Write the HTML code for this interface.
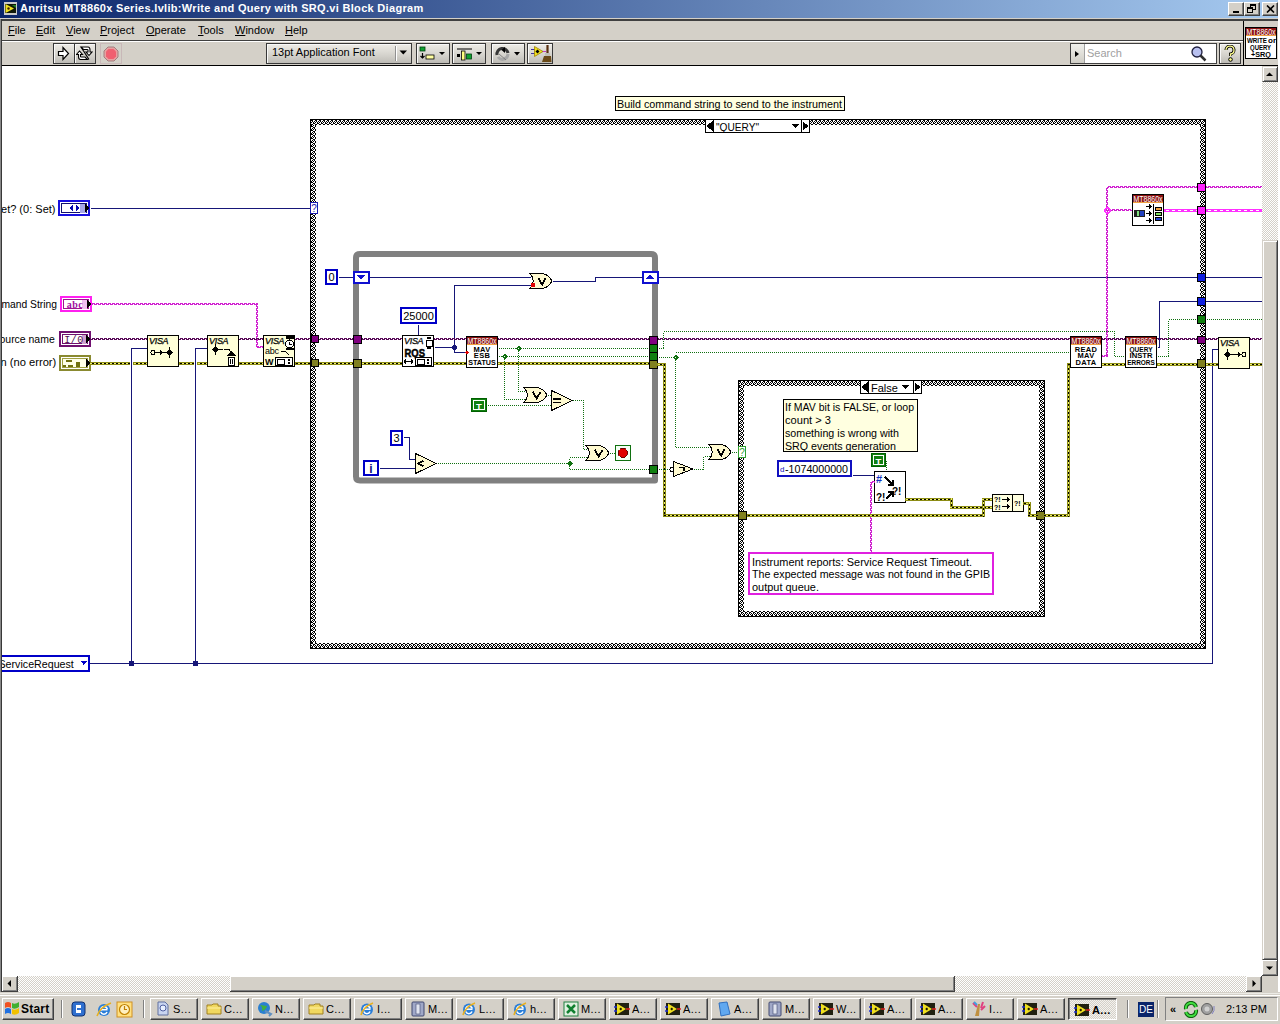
<!DOCTYPE html>
<html><head><meta charset="utf-8">
<style>
*{margin:0;padding:0;box-sizing:border-box}
html,body{width:1280px;height:1024px;overflow:hidden;background:#fff;font-family:"Liberation Sans",sans-serif}
.a{position:absolute}
#title{left:0;top:0;width:1280px;height:18px;background:linear-gradient(to right,#0a246a 0%,#a6caf0 100%)}
#ttext{left:20px;top:2px;color:#fff;font-weight:bold;font-size:11px;line-height:13px;white-space:nowrap;letter-spacing:0.31px}
.wbtn{top:2px;width:16px;height:14px;background:#d4d0c8;border-top:1px solid #fff;border-left:1px solid #fff;border-right:1px solid #404040;border-bottom:1px solid #404040;box-shadow:inset -1px -1px #808080}
.mi{top:24px;font-size:11px;line-height:13px;color:#000;white-space:nowrap}
.tb{top:43px;height:21px;background:linear-gradient(#eeece6,#d6d4ce 55%,#bebcb6);border:1px solid #383838;box-shadow:inset 1px 1px #f8f8f8}
.txt{font-size:11px;line-height:13px;white-space:nowrap;color:#000}
.tbtn{top:998px;height:22px;width:48px;background:#d4d0c8;border-top:1px solid #fff;border-left:1px solid #fff;border-right:1px solid #404040;border-bottom:1px solid #404040;box-shadow:inset -1px -1px #808080;font-size:11px;line-height:19px;white-space:nowrap;overflow:hidden}
.tbtn span{position:absolute;left:22px;top:0}
.tbtn i{position:absolute;left:4px;top:3px;width:14px;height:14px}
.sep{width:2px;border-left:1px solid #808080;border-right:1px solid #fff}
</style></head>
<body>
<!-- title bar -->
<div id="title" class="a"></div>
<div class="a" style="left:0;top:18px;width:1280px;height:1px;background:#d4d0c8"></div>
<div class="a" style="left:0;top:19px;width:1278px;height:2px;background:#404040"></div>
<svg class="a" style="left:4px;top:2px" width="13" height="13" viewBox="0 0 13 13">
<rect x="0" y="0" width="13" height="13" fill="#c8c8c8"/><rect x="1" y="2" width="11" height="9" fill="#101808"/>
<path d="M1.5 2 L10 6.5 L1.5 11 Z" fill="#f0e020"/><circle cx="4.5" cy="6.5" r="1.2" fill="#402000"/>
<path d="M8 3 L12 3 L12 6 Z" fill="#208020"/></svg>
<div id="ttext" class="a">Anritsu MT8860x Series.lvlib:Write and Query with SRQ.vi Block Diagram</div>
<div class="a wbtn" style="left:1228px"><div class="a" style="left:4px;top:8px;width:6px;height:2px;background:#000"></div></div>
<div class="a wbtn" style="left:1244px"><div class="a" style="left:5px;top:1px;width:6px;height:6px;border:1px solid #000;border-top-width:2px"></div><div class="a" style="left:2px;top:4px;width:6px;height:6px;border:1px solid #000;border-top-width:2px;background:#d4d0c8"></div></div>
<div class="a wbtn" style="left:1262px"></div><svg class="a" style="left:1266px;top:5px" width="9" height="8"><path d="M1 0.5 L8 7.5 M8 0.5 L1 7.5" stroke="#000" stroke-width="1.6"/></svg>
<div class="a" style="left:1278px;top:0;width:2px;height:1024px;background:#fff"></div>

<!-- menubar -->
<div class="a" style="left:0;top:21px;width:1278px;height:19px;background:#d4d0c8"></div>
<div class="a" style="left:0;top:40px;width:1244px;height:1px;background:#404040"></div>
<div class="a" style="left:0;top:41px;width:1244px;height:1px;background:#fff"></div>
<div class="a mi" style="left:8px"><u>F</u>ile</div>
<div class="a mi" style="left:36px"><u>E</u>dit</div>
<div class="a mi" style="left:66px"><u>V</u>iew</div>
<div class="a mi" style="left:100px"><u>P</u>roject</div>
<div class="a mi" style="left:146px"><u>O</u>perate</div>
<div class="a mi" style="left:198px"><u>T</u>ools</div>
<div class="a mi" style="left:235px"><u>W</u>indow</div>
<div class="a mi" style="left:285px"><u>H</u>elp</div>

<!-- toolbar -->
<div class="a" style="left:0;top:42px;width:1244px;height:23px;background:#d4d0c8"></div>
<div class="a" style="left:1243px;top:21px;width:1px;height:44px;background:#000"></div>
<div class="a" style="left:1244px;top:21px;width:34px;height:44px;background:#d4d0c8"></div>
<div class="a" style="left:0;top:65px;width:1278px;height:1px;background:#000"></div>
<!-- left window border -->
<div class="a" style="left:0;top:19px;width:1px;height:974px;background:#888"></div><div class="a" style="left:1px;top:19px;width:1px;height:974px;background:#383838"></div>

<!-- run buttons -->
<div class="a tb" style="left:53px;width:22px"></div>
<svg class="a" style="left:57px;top:46px" width="14" height="16" viewBox="0 0 14 16"><path d="M1.5 5.5 H6 V1.5 L11.5 7.5 L6 13.5 V9.5 H1.5 Z" fill="#fff" stroke="#000" stroke-width="1.2"/></svg>
<div class="a tb" style="left:74px;width:22px"></div>
<svg class="a" style="left:76px;top:46px" width="17" height="16" viewBox="0 0 17 16"><path d="M5 1 H12 Q14 1 14 4 V6 H16 L13 9.5 L10 6 H12 V4 Q12 3.5 11 3.5 H7.5 Z" fill="#fff" stroke="#000" stroke-width="1.1"/><path d="M11.5 13.5 H4.5 Q2.5 13.5 2.5 10.5 V8.5 H0.5 L3.5 5 L6.5 8.5 H4.5 V10.5 Q4.5 11 5.5 11 H9 Z" fill="#fff" stroke="#000" stroke-width="1.1"/><path d="M5 1 L13 13.5" stroke="#000" stroke-width="1.2"/></svg>
<div class="a" style="left:100px;top:43px;width:22px;height:21px;border:1px solid #c8b8b8;background:#d4d0c8"></div>
<svg class="a" style="left:103px;top:46px" width="16" height="16" viewBox="0 0 16 16"><path d="M5 1 H11 L15 5 V11 L11 15 H5 L1 11 V5 Z" fill="#e8a0a0" stroke="#a08080"/><path d="M5.5 3 H10.5 L13 5.5 V10.5 L10.5 13 H5.5 L3 10.5 V5.5 Z" fill="#f06070"/></svg>

<!-- font dropdown -->
<div class="a tb" style="left:266px;width:146px"></div>
<div class="a txt" style="left:272px;top:46px">13pt Application Font</div>
<div class="a" style="left:395px;top:46px;width:1px;height:15px;background:#909090"></div>
<div class="a" style="left:396px;top:46px;width:1px;height:15px;background:#fff"></div>
<svg class="a" style="left:399px;top:50px" width="9" height="6"><path d="M0.5 0.5 H8 L4.25 4.5 Z" fill="#000"/></svg>
<!-- align etc -->
<div class="a tb" style="left:416px;width:34px"></div>
<svg class="a" style="left:419px;top:46px" width="30" height="16"><rect x="1" y="1" width="5" height="4" fill="#10a030" stroke="#004010" stroke-width="0.8"/><path d="M3.5 7 V12 M1.5 10 L3.5 12 L5.5 10" stroke="#000" stroke-width="1.2" fill="none"/><rect x="7" y="9" width="8" height="4" fill="#ffffa0" stroke="#000" stroke-width="0.8"/><path d="M20 6 H26 L23 9 Z" fill="#000"/></svg>
<div class="a tb" style="left:452px;width:34px"></div>
<svg class="a" style="left:455px;top:46px" width="30" height="16"><path d="M2 3 H17" stroke="#000" stroke-width="1"/><rect x="2" y="8" width="3" height="3" fill="#000"/><rect x="6.5" y="5" width="3.5" height="9" fill="#ffff80" stroke="#000" stroke-width="0.8"/><rect x="11.5" y="8" width="5" height="5" fill="#10a030" stroke="#004010" stroke-width="0.8"/><path d="M21 6 H27 L24 9 Z" fill="#000"/></svg>
<div class="a tb" style="left:491px;width:34px"></div>
<svg class="a" style="left:494px;top:45px" width="30" height="17"><path d="M3 10 A5.5 5.5 0 0 1 14 8" stroke="#383838" stroke-width="3" fill="none"/><path d="M11 2 L7.5 5 L11 8 Z" fill="#000"/><path d="M14 9 A5.5 5.5 0 0 1 4 12" stroke="#a8a8a8" stroke-width="3" fill="none"/><path d="M5 9 L12 15" stroke="#707070" stroke-width="0.8"/><path d="M20 7 H26 L23 10.5 Z" fill="#000"/></svg>
<div class="a tb" style="left:527px;width:26px"></div>
<svg class="a" style="left:530px;top:44px" width="22" height="19"><path d="M1 5.5 H5 M1 9.5 H5" stroke="#4030a0" stroke-width="1.2"/><path d="M12 7.5 H16" stroke="#c040c0"/><path d="M4.5 2.5 L13 7.5 L4.5 12.5 Z" fill="#f0e020" stroke="#a08000" stroke-width="0.8"/><path d="M7.5 5.5 L9.5 7.5 L7.5 9.5 L5.5 7.5Z" fill="#000"/><path d="M17.5 1 V10" stroke="#5a3010" stroke-width="2.2"/><rect x="15" y="9" width="5" height="3" fill="#c0c0b8"/><path d="M12 18 L14 12 H21 L21.5 18 Z" fill="#6a4a18"/></svg>

<!-- search -->
<div class="a" style="left:1070px;top:43px;width:147px;height:21px;background:#fff;border:1px solid #404040"></div>
<div class="a" style="left:1071px;top:44px;width:14px;height:19px;background:linear-gradient(#f0f0ec,#d0cec6);border-right:1px solid #a0a0a0"></div>
<svg class="a" style="left:1074px;top:50px" width="6" height="8"><path d="M1 1 L5 4 L1 7 Z" fill="#000"/></svg>
<div class="a txt" style="left:1087px;top:47px;color:#a0a0a0">Search</div>
<svg class="a" style="left:1190px;top:45px" width="18" height="18"><circle cx="7" cy="7" r="5" fill="#b8c0f0" stroke="#202040" stroke-width="1.3"/><path d="M10.5 10.5 L15.5 15.5" stroke="#303030" stroke-width="2.5"/></svg>
<div class="a tb" style="left:1219px;width:22px"></div>
<svg class="a" style="left:1223px;top:45px" width="14" height="18"><path d="M3 5 A4 4 0 1 1 7.5 9 V11" stroke="#000" stroke-width="3" fill="none"/><path d="M3 5 A4 4 0 1 1 7.5 9 V11" stroke="#ffff90" stroke-width="1.3" fill="none"/><circle cx="7.5" cy="14.5" r="1.8" fill="#ffff90" stroke="#000" stroke-width="1"/></svg>
<!-- vi icon -->
<svg class="a" style="left:1245px;top:27px" width="32" height="32" viewBox="0 0 32 32">
<rect x="0.5" y="0.5" width="31" height="31" fill="#fff" stroke="#000"/>
<rect x="1" y="1" width="30" height="7" fill="#8b1010"/><rect x="1" y="8" width="30" height="1" fill="#f0a040"/>
<text x="1.5" y="7.6" font-family="Liberation Sans" font-size="9" fill="#fff" textLength="29" lengthAdjust="spacingAndGlyphs">MT8860x</text>
<text x="2" y="16" font-family="Liberation Sans" font-size="8" font-weight="bold" fill="#000" textLength="20" lengthAdjust="spacingAndGlyphs">WRITE</text>
<text x="23" y="16" font-family="Liberation Sans" font-size="7" font-weight="bold" fill="#000" textLength="8" lengthAdjust="spacingAndGlyphs">or</text>
<text x="5" y="23" font-family="Liberation Sans" font-size="8" font-weight="bold" fill="#000" textLength="21" lengthAdjust="spacingAndGlyphs">QUERY</text>
<text x="6" y="30" font-family="Liberation Sans" font-size="8" font-weight="bold" fill="#000" textLength="20" lengthAdjust="spacingAndGlyphs">+SRQ</text>
</svg>
<!-- CANVAS -->
<div id="diagram"></div>
<svg class="a" style="left:0;top:0" width="1280" height="1024" viewBox="0 0 1280 1024"><defs><pattern id="sqh_d020d0" width="4" height="3" patternUnits="userSpaceOnUse"><path d="M0 0h3v1h-2v2h-1z M2 1h1v1h1v1h-2z" fill="#d020d0"/></pattern><pattern id="sqv_d020d0" width="3" height="4" patternUnits="userSpaceOnUse"><path d="M0 0v3h1v-2h2v-1z M1 2v1h1v1h1v-2z" fill="#d020d0"/></pattern><pattern id="sqh_580858" width="4" height="3" patternUnits="userSpaceOnUse"><path d="M0 0h3v1h-2v2h-1z M2 1h1v1h1v1h-2z" fill="#580858"/></pattern><pattern id="sqv_580858" width="3" height="4" patternUnits="userSpaceOnUse"><path d="M0 0v3h1v-2h2v-1z M1 2v1h1v1h1v-2z" fill="#580858"/></pattern><pattern id="errh" width="4" height="3" patternUnits="userSpaceOnUse"><rect width="4" height="3" fill="#8a8a10"/><rect x="0" y="1" width="2" height="1" fill="#000"/><rect x="2" y="1" width="2" height="1" fill="#f4f480"/></pattern><pattern id="errv" width="3" height="4" patternUnits="userSpaceOnUse"><rect width="3" height="4" fill="#8a8a10"/><rect x="1" y="0" width="1" height="2" fill="#000"/><rect x="1" y="2" width="1" height="2" fill="#f4f480"/></pattern><pattern id="chk" width="2" height="2" patternUnits="userSpaceOnUse"><rect width="2" height="2" fill="#fff"/><rect width="1" height="1" fill="#000"/><rect x="1" y="1" width="1" height="1" fill="#000"/></pattern><pattern id="pinkarr" width="6" height="3" patternUnits="userSpaceOnUse"><rect width="6" height="3" fill="#ff30ff"/><rect x="0" y="1" width="3" height="1" fill="#fff"/></pattern><pattern id="bh1" x="311" y="120" width="4" height="5" patternUnits="userSpaceOnUse"><rect width="4" height="5" fill="#fff"/><path d="M0 0h1v1h-1zM1 0h1v1h-1zM1 1h1v1h-1zM3 1h1v1h-1zM0 2h1v1h-1zM2 2h1v1h-1zM2 3h1v1h-1zM3 3h1v1h-1zM0 4h1v1h-1zM1 4h1v1h-1z" fill="#000"/></pattern><pattern id="bh2" x="311" y="643" width="4" height="5" patternUnits="userSpaceOnUse"><rect width="4" height="5" fill="#fff"/><path d="M0 0h1v1h-1zM1 0h1v1h-1zM2 1h1v1h-1zM3 1h1v1h-1zM0 2h1v1h-1zM2 2h1v1h-1zM1 3h1v1h-1zM3 3h1v1h-1zM0 4h1v1h-1zM1 4h1v1h-1z" fill="#000"/></pattern><pattern id="bv3" x="311" y="125" width="5" height="4" patternUnits="userSpaceOnUse"><rect width="5" height="4" fill="#fff"/><path d="M0 0h1v1h-1zM0 1h1v1h-1zM1 1h1v1h-1zM1 3h1v1h-1zM2 0h1v1h-1zM2 2h1v1h-1zM3 2h1v1h-1zM3 3h1v1h-1zM4 0h1v1h-1zM4 1h1v1h-1z" fill="#000"/></pattern><pattern id="bv4" x="1200" y="125" width="5" height="4" patternUnits="userSpaceOnUse"><rect width="5" height="4" fill="#fff"/><path d="M0 0h1v1h-1zM0 1h1v1h-1zM1 2h1v1h-1zM1 3h1v1h-1zM2 0h1v1h-1zM2 2h1v1h-1zM3 1h1v1h-1zM3 3h1v1h-1zM4 0h1v1h-1zM4 1h1v1h-1z" fill="#000"/></pattern><pattern id="bh5" x="739" y="381" width="4" height="5" patternUnits="userSpaceOnUse"><rect width="4" height="5" fill="#fff"/><path d="M0 0h1v1h-1zM1 0h1v1h-1zM1 1h1v1h-1zM3 1h1v1h-1zM0 2h1v1h-1zM2 2h1v1h-1zM2 3h1v1h-1zM3 3h1v1h-1zM0 4h1v1h-1zM1 4h1v1h-1z" fill="#000"/></pattern><pattern id="bh6" x="739" y="611" width="4" height="5" patternUnits="userSpaceOnUse"><rect width="4" height="5" fill="#fff"/><path d="M0 0h1v1h-1zM1 0h1v1h-1zM2 1h1v1h-1zM3 1h1v1h-1zM0 2h1v1h-1zM2 2h1v1h-1zM1 3h1v1h-1zM3 3h1v1h-1zM0 4h1v1h-1zM1 4h1v1h-1z" fill="#000"/></pattern><pattern id="bv7" x="739" y="386" width="5" height="4" patternUnits="userSpaceOnUse"><rect width="5" height="4" fill="#fff"/><path d="M0 0h1v1h-1zM0 1h1v1h-1zM1 1h1v1h-1zM1 3h1v1h-1zM2 0h1v1h-1zM2 2h1v1h-1zM3 2h1v1h-1zM3 3h1v1h-1zM4 0h1v1h-1zM4 1h1v1h-1z" fill="#000"/></pattern><pattern id="bv8" x="1039" y="386" width="5" height="4" patternUnits="userSpaceOnUse"><rect width="5" height="4" fill="#fff"/><path d="M0 0h1v1h-1zM0 1h1v1h-1zM1 2h1v1h-1zM1 3h1v1h-1zM2 0h1v1h-1zM2 2h1v1h-1zM3 1h1v1h-1zM3 3h1v1h-1zM4 0h1v1h-1zM4 1h1v1h-1z" fill="#000"/></pattern><clipPath id="cv"><rect x="2" y="66" width="1260" height="910"/></clipPath></defs><g clip-path="url(#cv)" shape-rendering="crispEdges"><text x="1" y="212.5" font-family="Liberation Sans" font-size="11" fill="#000" font-weight="normal" font-style="normal" text-anchor="start" textLength="54.5" lengthAdjust="spacingAndGlyphs" >et? (0: Set)</text>
<text x="1.5" y="307.5" font-family="Liberation Sans" font-size="11" fill="#000" font-weight="normal" font-style="normal" text-anchor="start" textLength="55.5" lengthAdjust="spacingAndGlyphs" >mand String</text>
<text x="-0.5" y="342.5" font-family="Liberation Sans" font-size="11" fill="#000" font-weight="normal" font-style="normal" text-anchor="start" textLength="55.2" lengthAdjust="spacingAndGlyphs" >ource name</text>
<text x="0.5" y="366" font-family="Liberation Sans" font-size="11" fill="#000" font-weight="normal" font-style="normal" text-anchor="start" textLength="55.8" lengthAdjust="spacingAndGlyphs" >n (no error)</text>
<rect x="58" y="200" width="32" height="16" fill="#1810e0" stroke="none" stroke-width="1" />
<rect x="60" y="202" width="28" height="12" fill="#fff" stroke="none" stroke-width="1" />
<rect x="61.5" y="203.5" width="25" height="9" fill="#fff" stroke="#101070" stroke-width="1" />
<rect x="80" y="204" width="6" height="9" fill="#a8a8e8" stroke="none" stroke-width="1" />
<path d="M73 204 L69.5 208 L73 212Z M76 204 L79.5 208 L76 212Z" fill="#0808b0"/>
<path d="M85 204 L89 208 L85 212Z" fill="#000"/>
<rect x="60" y="296" width="32" height="16" fill="#ff20f0" stroke="none" stroke-width="1" />
<rect x="62" y="298" width="28" height="12" fill="#fff" stroke="none" stroke-width="1" />
<rect x="63.5" y="299.5" width="25" height="9" fill="#fff" stroke="#a01090" stroke-width="1" />
<rect x="82" y="300" width="5" height="9" fill="#f0c0f0" stroke="none" stroke-width="1" />
<text x="75" y="308" font-family="Liberation Serif" font-size="10" fill="#a010a0" font-weight="bold" font-style="normal" text-anchor="middle" letter-spacing="0.5" >abc</text>
<path d="M87 300 L91 304 L87 308Z" fill="#000"/>
<rect x="59" y="331" width="32" height="16" fill="#701070" stroke="none" stroke-width="1" />
<rect x="61" y="333" width="28" height="12" fill="#fff" stroke="none" stroke-width="1" />
<rect x="62.5" y="334.5" width="25" height="9" fill="#fff" stroke="#701070" stroke-width="1" />
<rect x="82" y="335" width="5" height="9" fill="#d0a0d0" stroke="none" stroke-width="1" />
<text x="74" y="343" font-family="Liberation Mono" font-size="10" fill="#501050" font-weight="normal" font-style="normal" text-anchor="middle" letter-spacing="0.5" >I/0</text>
<path d="M86 335 L90 339 L86 343Z" fill="#000"/>
<rect x="59" y="355" width="32" height="16" fill="#8a8a30" stroke="none" stroke-width="1" />
<rect x="61" y="357" width="28" height="12" fill="#fff" stroke="none" stroke-width="1" />
<rect x="62.5" y="358.5" width="25" height="9" fill="#ffffe8" stroke="#a0a040" stroke-width="1" />
<path d="M66 360 h6 v2 h-6z M63 365 h3 v2 h-3z M68 365 h5 v2 h-5z M76 362 h4 v5 h-4z" fill="#707010"/>
<path d="M86 359 L90 363 L86 367Z" fill="#000"/>
<path d="M90.5 208.5 L310.5 208.5" fill="none" stroke="#161678" stroke-width="1"/>
<path d="M92 303h3v1h-3zM96 303h3v1h-3zM100 303h3v1h-3zM104 303h3v1h-3zM108 303h3v1h-3zM112 303h3v1h-3zM116 303h3v1h-3zM120 303h3v1h-3zM124 303h3v1h-3zM128 303h3v1h-3zM132 303h3v1h-3zM136 303h3v1h-3zM140 303h3v1h-3zM144 303h3v1h-3zM148 303h3v1h-3zM152 303h3v1h-3zM156 303h3v1h-3zM160 303h3v1h-3zM164 303h3v1h-3zM168 303h3v1h-3zM172 303h3v1h-3zM176 303h3v1h-3zM180 303h3v1h-3zM184 303h3v1h-3zM188 303h3v1h-3zM192 303h3v1h-3zM196 303h3v1h-3zM200 303h3v1h-3zM204 303h3v1h-3zM208 303h3v1h-3zM212 303h3v1h-3zM216 303h3v1h-3zM220 303h3v1h-3zM224 303h3v1h-3zM228 303h3v1h-3zM232 303h3v1h-3zM236 303h3v1h-3zM240 303h3v1h-3zM244 303h3v1h-3zM248 303h3v1h-3zM252 303h3v1h-3zM256 303h2v1h-2zM92 304h1v1h-1zM94 304h3v1h-3zM98 304h3v1h-3zM102 304h3v1h-3zM106 304h3v1h-3zM110 304h3v1h-3zM114 304h3v1h-3zM118 304h3v1h-3zM122 304h3v1h-3zM126 304h3v1h-3zM130 304h3v1h-3zM134 304h3v1h-3zM138 304h3v1h-3zM142 304h3v1h-3zM146 304h3v1h-3zM150 304h3v1h-3zM154 304h3v1h-3zM158 304h3v1h-3zM162 304h3v1h-3zM166 304h3v1h-3zM170 304h3v1h-3zM174 304h3v1h-3zM178 304h3v1h-3zM182 304h3v1h-3zM186 304h3v1h-3zM190 304h3v1h-3zM194 304h3v1h-3zM198 304h3v1h-3zM202 304h3v1h-3zM206 304h3v1h-3zM210 304h3v1h-3zM214 304h3v1h-3zM218 304h3v1h-3zM222 304h3v1h-3zM226 304h3v1h-3zM230 304h3v1h-3zM234 304h3v1h-3zM238 304h3v1h-3zM242 304h3v1h-3zM246 304h3v1h-3zM250 304h3v1h-3zM254 304h3v1h-3z" fill="#d020d0"/>
<path d="M256 304v3h1v-3zM256 308v3h1v-3zM256 312v3h1v-3zM256 316v3h1v-3zM256 320v3h1v-3zM256 324v3h1v-3zM256 328v3h1v-3zM256 332v3h1v-3zM256 336v3h1v-3zM256 340v3h1v-3zM256 344v3h1v-3zM257 304v1h1v-1zM257 306v3h1v-3zM257 310v3h1v-3zM257 314v3h1v-3zM257 318v3h1v-3zM257 322v3h1v-3zM257 326v3h1v-3zM257 330v3h1v-3zM257 334v3h1v-3zM257 338v3h1v-3zM257 342v3h1v-3zM257 346v2h1v-2z" fill="#d020d0"/>
<path d="M257 346h2v1h-2zM260 346h3v1h-3zM258 347h3v1h-3zM262 347h2v1h-2z" fill="#d020d0"/>
<path d="M90 338h1v1h-1zM92 338h3v1h-3zM96 338h3v1h-3zM100 338h3v1h-3zM104 338h3v1h-3zM108 338h3v1h-3zM112 338h3v1h-3zM116 338h3v1h-3zM120 338h3v1h-3zM124 338h3v1h-3zM128 338h3v1h-3zM132 338h3v1h-3zM136 338h3v1h-3zM140 338h3v1h-3zM144 338h3v1h-3zM90 339h3v1h-3zM94 339h3v1h-3zM98 339h3v1h-3zM102 339h3v1h-3zM106 339h3v1h-3zM110 339h3v1h-3zM114 339h3v1h-3zM118 339h3v1h-3zM122 339h3v1h-3zM126 339h3v1h-3zM130 339h3v1h-3zM134 339h3v1h-3zM138 339h3v1h-3zM142 339h3v1h-3zM146 339h1v1h-1z" fill="#580858"/>
<path d="M180 338h3v1h-3zM184 338h3v1h-3zM188 338h3v1h-3zM192 338h3v1h-3zM196 338h3v1h-3zM200 338h3v1h-3zM204 338h3v1h-3zM179 339h2v1h-2zM182 339h3v1h-3zM186 339h3v1h-3zM190 339h3v1h-3zM194 339h3v1h-3zM198 339h3v1h-3zM202 339h3v1h-3zM206 339h1v1h-1z" fill="#580858"/>
<path d="M240 338h3v1h-3zM244 338h3v1h-3zM248 338h3v1h-3zM252 338h3v1h-3zM256 338h3v1h-3zM260 338h3v1h-3zM239 339h2v1h-2zM242 339h3v1h-3zM246 339h3v1h-3zM250 339h3v1h-3zM254 339h3v1h-3zM258 339h3v1h-3zM262 339h1v1h-1z" fill="#580858"/>
<path d="M296 338h3v1h-3zM300 338h3v1h-3zM304 338h3v1h-3zM308 338h3v1h-3zM295 339h2v1h-2zM298 339h3v1h-3zM302 339h3v1h-3zM306 339h3v1h-3zM310 339h1v1h-1z" fill="#580858"/>
<rect x="90" y="362" width="40" height="3" fill="#8c8c14"/>
<path d="M92 363h2v1h-2zM96 363h2v1h-2zM100 363h2v1h-2zM104 363h2v1h-2zM108 363h2v1h-2zM112 363h2v1h-2zM116 363h2v1h-2zM120 363h2v1h-2zM124 363h2v1h-2zM128 363h2v1h-2z" fill="#000"/><path d="M90 363h2v1h-2zM94 363h2v1h-2zM98 363h2v1h-2zM102 363h2v1h-2zM106 363h2v1h-2zM110 363h2v1h-2zM114 363h2v1h-2zM118 363h2v1h-2zM122 363h2v1h-2zM126 363h2v1h-2z" fill="#f0f070"/>
<rect x="133" y="362" width="14" height="3" fill="#8c8c14"/>
<path d="M136 363h2v1h-2zM140 363h2v1h-2zM144 363h2v1h-2z" fill="#000"/><path d="M134 363h2v1h-2zM138 363h2v1h-2zM142 363h2v1h-2zM146 363h1v1h-1z" fill="#f0f070"/>
<rect x="179" y="362" width="15" height="3" fill="#8c8c14"/>
<path d="M180 363h2v1h-2zM184 363h2v1h-2zM188 363h2v1h-2zM192 363h2v1h-2z" fill="#000"/><path d="M182 363h2v1h-2zM186 363h2v1h-2zM190 363h2v1h-2z" fill="#f0f070"/>
<rect x="197" y="362" width="10" height="3" fill="#8c8c14"/>
<path d="M200 363h2v1h-2zM204 363h2v1h-2z" fill="#000"/><path d="M198 363h2v1h-2zM202 363h2v1h-2zM206 363h1v1h-1z" fill="#f0f070"/>
<rect x="239" y="362" width="24" height="3" fill="#8c8c14"/>
<path d="M240 363h2v1h-2zM244 363h2v1h-2zM248 363h2v1h-2zM252 363h2v1h-2zM256 363h2v1h-2zM260 363h2v1h-2z" fill="#000"/><path d="M242 363h2v1h-2zM246 363h2v1h-2zM250 363h2v1h-2zM254 363h2v1h-2zM258 363h2v1h-2zM262 363h1v1h-1z" fill="#f0f070"/>
<rect x="295" y="362" width="16" height="3" fill="#8c8c14"/>
<path d="M296 363h2v1h-2zM300 363h2v1h-2zM304 363h2v1h-2zM308 363h2v1h-2z" fill="#000"/><path d="M298 363h2v1h-2zM302 363h2v1h-2zM306 363h2v1h-2zM310 363h1v1h-1z" fill="#f0f070"/>
<path d="M131.5 663.5 L131.5 348.5 L147.5 348.5" fill="none" stroke="#161678" stroke-width="1"/>
<path d="M195.5 663.5 L195.5 348.5 L207.5 348.5" fill="none" stroke="#161678" stroke-width="1"/>
<path d="M89.5 663.5 L1212.5 663.5 L1212.5 349.5 L1218.5 349.5" fill="none" stroke="#161678" stroke-width="1"/>
<circle cx="131.5" cy="663.5" r="2.8" fill="#161678"/>
<circle cx="195.5" cy="663.5" r="2.8" fill="#161678"/>
<rect x="-2" y="656" width="90.5" height="15" fill="#fff" stroke="#0000c8" stroke-width="2" />
<text x="-1.5" y="668" font-family="Liberation Sans" font-size="11" fill="#000" font-weight="normal" font-style="normal" text-anchor="start" textLength="75.3" lengthAdjust="spacingAndGlyphs" >ServiceRequest</text>
<path d="M80.5 661 H87 L83.75 665 Z" fill="#0000c8"/>
<rect x="147.5" y="335.5" width="31" height="31" fill="#ffffd8" stroke="#000" stroke-width="1" />
<text x="149" y="344" font-family="Liberation Sans" font-size="9" fill="#000" font-weight="normal" font-style="italic" text-anchor="start" letter-spacing="-0.3" stroke="#000" stroke-width="0.25">VISA</text>
<rect x="207.5" y="335.5" width="31" height="31" fill="#ffffd8" stroke="#000" stroke-width="1" />
<text x="209" y="344" font-family="Liberation Sans" font-size="9" fill="#000" font-weight="normal" font-style="italic" text-anchor="start" letter-spacing="-0.3" stroke="#000" stroke-width="0.25">VISA</text>
<circle cx="153" cy="352.5" r="2" fill="none" stroke="#000"/>
<path d="M155 352.5 H162 M160 350.5 L162 352.5 L160 354.5 M163 352.5 H170" stroke="#000" fill="none"/>
<path d="M169.5 349 L173 352.5 L169.5 356 L166 352.5Z" fill="#000"/><path d="M169.5 347 V358" stroke="#000"/>
<path d="M213 349.5 H223 M224 349.5 H229 L231 352" stroke="#000" fill="none"/>
<path d="M215.5 346 L219 349.5 L215.5 353 L212 349.5Z" fill="#000"/><path d="M215.5 344 V355" stroke="#000"/>
<path d="M227 356 H236 L231.5 351Z" fill="#000"/><rect x="228.5" y="357.5" width="6" height="8" fill="#fff" stroke="#000"/><path d="M230.5 359 V364 M232.5 359 V364" stroke="#000"/>
<rect x="263.5" y="335.5" width="31" height="31" fill="#ffffd8" stroke="#000" stroke-width="1" />
<text x="265" y="344" font-family="Liberation Sans" font-size="9" fill="#000" font-weight="normal" font-style="italic" text-anchor="start" letter-spacing="-0.3" stroke="#000" stroke-width="0.25">VISA</text>
<rect x="286" y="336" width="8" height="3" fill="#000"/><circle cx="289.5" cy="344" r="4" fill="#fff" stroke="#000" stroke-width="1.2"/><path d="M289.5 341.5 V344 H291.5" stroke="#000" fill="none"/><rect x="286" y="348" width="8" height="2" fill="#000"/>
<text x="265" y="354" font-family="Liberation Sans" font-size="9" fill="#000" font-weight="normal" font-style="normal" text-anchor="start" letter-spacing="-0.3" >abc</text>
<path d="M281 351 H285 L289 355" stroke="#000" fill="none"/>
<text x="265" y="365" font-family="Liberation Sans" font-size="9" fill="#000" font-weight="bold" font-style="normal" text-anchor="start" >W</text>
<rect x="275.5" y="357.5" width="17" height="8" fill="#fff" stroke="#000"/><rect x="277" y="359" width="7" height="5" fill="none" stroke="#000"/><rect x="288" y="359" width="2" height="2" fill="#000"/><rect x="288" y="362" width="2" height="2" fill="#000"/>
<rect x="311" y="120" width="894" height="5" fill="url(#bh1)"/>
<rect x="311" y="643" width="894" height="5" fill="url(#bh2)"/>
<rect x="311" y="125" width="5" height="518" fill="url(#bv3)"/>
<rect x="1200" y="125" width="5" height="518" fill="url(#bv4)"/>
<rect x="310.5" y="119.5" width="895" height="529" fill="none" stroke="#000" stroke-width="1" />
<rect x="310.5" y="202.5" width="7" height="11" fill="#fff" stroke="#1a1ab0" stroke-width="1.2" />
<text x="314" y="212" font-family="Liberation Sans" font-size="10" fill="#1a1ab0" font-weight="normal" font-style="normal" text-anchor="middle" >?</text>
<rect x="705.5" y="119.5" width="104" height="13" fill="#fff" stroke="#000" stroke-width="1" />
<path d="M713.5 120 V132 M801.5 120 V132" stroke="#000"/>
<path d="M712.5 121 V131 L706.5 126Z M802.5 121 V131 L808.5 126Z" fill="#000"/>
<text x="716" y="131" font-family="Liberation Sans" font-size="11" fill="#000" font-weight="normal" font-style="normal" text-anchor="start" textLength="43" lengthAdjust="spacingAndGlyphs" >"QUERY"</text>
<path d="M792 124 H799 L795.5 128Z" fill="#000"/>
<rect x="615.5" y="96.5" width="229" height="14" fill="#ffffe0" stroke="#000" stroke-width="1" />
<text x="617" y="108" font-family="Liberation Sans" font-size="11" fill="#000" font-weight="normal" font-style="normal" text-anchor="start" textLength="225" lengthAdjust="spacingAndGlyphs" >Build command string to send to the instrument</text>
<path d="M310.5 208.5" fill="none" stroke="#161678" stroke-width="1"/>
<rect x="311.5" y="335.5" width="7" height="7" fill="#800080" stroke="#000" stroke-width="1" />
<rect x="311.5" y="359.5" width="7" height="7" fill="#808020" stroke="#000" stroke-width="1" />
<path d="M320 338h3v1h-3zM324 338h3v1h-3zM328 338h3v1h-3zM332 338h3v1h-3zM336 338h3v1h-3zM340 338h3v1h-3zM344 338h3v1h-3zM348 338h3v1h-3zM352 338h2v1h-2zM319 339h2v1h-2zM322 339h3v1h-3zM326 339h3v1h-3zM330 339h3v1h-3zM334 339h3v1h-3zM338 339h3v1h-3zM342 339h3v1h-3zM346 339h3v1h-3zM350 339h3v1h-3z" fill="#580858"/>
<rect x="319" y="362" width="35" height="3" fill="#8c8c14"/>
<path d="M320 363h2v1h-2zM324 363h2v1h-2zM328 363h2v1h-2zM332 363h2v1h-2zM336 363h2v1h-2zM340 363h2v1h-2zM344 363h2v1h-2zM348 363h2v1h-2zM352 363h2v1h-2z" fill="#000"/><path d="M322 363h2v1h-2zM326 363h2v1h-2zM330 363h2v1h-2zM334 363h2v1h-2zM338 363h2v1h-2zM342 363h2v1h-2zM346 363h2v1h-2zM350 363h2v1h-2z" fill="#f0f070"/>
<path d="M356 258 Q356 254 360 254 H651 Q655 254 655 258 V480.5 H360 Q356 480.5 356 476.5 Z" fill="none" stroke="#808080" stroke-width="6" stroke-linejoin="round" shape-rendering="geometricPrecision"/>
<rect x="326.0" y="270.0" width="11" height="14" fill="#fff" stroke="#0000c8" stroke-width="2" />
<text x="331.5" y="281" font-family="Liberation Sans" font-size="11" fill="#000" font-weight="normal" font-style="normal" text-anchor="middle" >0</text>
<path d="M338.5 277.5 L353.5 277.5" fill="none" stroke="#161678" stroke-width="1"/>
<rect x="353.5" y="271.5" width="15" height="11" fill="#fff" stroke="#1010d0" stroke-width="2" />
<path d="M357 275 H365 L361 280Z" fill="#1010d0"/>
<path d="M369.5 277.5 L530.5 277.5" fill="none" stroke="#161678" stroke-width="1"/>
<rect x="642.5" y="271.5" width="15" height="11" fill="#fff" stroke="#1010d0" stroke-width="2" />
<path d="M646 279 H654 L650 274Z" fill="#1010d0"/>
<path d="M454.5 347.5 L454.5 285.5 L531.5 285.5" fill="none" stroke="#161678" stroke-width="1"/>
<path d="M530 273.5 H539.9 Q548.7 273.5 552 281.0 Q548.7 288.5 539.9 288.5 H530 Q536.6 281.0 530 273.5 Z" fill="#fffad0" stroke="#000" stroke-width="1"/>
<path d="M538.36 277.8 L542.1 284.52 L545.84 277.8" fill="none" stroke="#000" stroke-width="1.8"/>
<circle cx="533" cy="285" r="2.2" fill="#e00000"/>
<path d="M552.5 281.5 L595.5 281.5 L595.5 277.5 L642.5 277.5" fill="none" stroke="#161678" stroke-width="1"/>
<path d="M658.5 277.5 L1262.5 277.5" fill="none" stroke="#161678" stroke-width="1"/>
<rect x="353.5" y="335.5" width="8" height="8" fill="#800080" stroke="#000" stroke-width="1" />
<rect x="353.5" y="359.5" width="8" height="8" fill="#808020" stroke="#000" stroke-width="1" />
<path d="M362 338h1v1h-1zM364 338h3v1h-3zM368 338h3v1h-3zM372 338h3v1h-3zM376 338h3v1h-3zM380 338h3v1h-3zM384 338h3v1h-3zM388 338h3v1h-3zM392 338h3v1h-3zM396 338h3v1h-3zM400 338h2v1h-2zM362 339h3v1h-3zM366 339h3v1h-3zM370 339h3v1h-3zM374 339h3v1h-3zM378 339h3v1h-3zM382 339h3v1h-3zM386 339h3v1h-3zM390 339h3v1h-3zM394 339h3v1h-3zM398 339h3v1h-3z" fill="#580858"/>
<rect x="362" y="362" width="40" height="3" fill="#8c8c14"/>
<path d="M364 363h2v1h-2zM368 363h2v1h-2zM372 363h2v1h-2zM376 363h2v1h-2zM380 363h2v1h-2zM384 363h2v1h-2zM388 363h2v1h-2zM392 363h2v1h-2zM396 363h2v1h-2zM400 363h2v1h-2z" fill="#000"/><path d="M362 363h2v1h-2zM366 363h2v1h-2zM370 363h2v1h-2zM374 363h2v1h-2zM378 363h2v1h-2zM382 363h2v1h-2zM386 363h2v1h-2zM390 363h2v1h-2zM394 363h2v1h-2zM398 363h2v1h-2z" fill="#f0f070"/>
<rect x="401.0" y="308.0" width="35" height="15" fill="#fff" stroke="#0000c8" stroke-width="2" />
<text x="418.5" y="320" font-family="Liberation Sans" font-size="11" fill="#000" font-weight="normal" font-style="normal" text-anchor="middle" >25000</text>
<path d="M418.5 324.5 L418.5 335.5" fill="none" stroke="#161678" stroke-width="1"/>
<rect x="402.5" y="335.5" width="31" height="31" fill="#fff" stroke="#000" stroke-width="1" />
<text x="404" y="344" font-family="Liberation Sans" font-size="9" fill="#000" font-weight="normal" font-style="italic" text-anchor="start" letter-spacing="-0.3" stroke="#000" stroke-width="0.25">VISA</text>
<rect x="427" y="337" width="4" height="2" fill="#000"/><rect x="426" y="340" width="6" height="6" fill="#fff" stroke="#000"/><rect x="427" y="347" width="4" height="2" fill="#000"/>
<text x="404.5" y="356.5" font-family="Liberation Sans" font-size="10.5" fill="#000" font-weight="bold" font-style="normal" text-anchor="start" textLength="20.5" lengthAdjust="spacingAndGlyphs" stroke="#000" stroke-width="0.5">RQS</text>
<path d="M405 361.5 H412 M404 361.5 L406 359.5 M404 361.5 L406 363.5 M413 361.5 L411 359.5 M413 361.5 L411 363.5" stroke="#000"/>
<rect x="415.5" y="357.5" width="16" height="8" fill="#fff" stroke="#000"/><rect x="417" y="359" width="7" height="5" fill="none" stroke="#000"/><rect x="427" y="359" width="2" height="2" fill="#000"/><rect x="427" y="362" width="2" height="2" fill="#000"/>
<path d="M434 338h1v1h-1zM436 338h3v1h-3zM440 338h3v1h-3zM444 338h3v1h-3zM448 338h3v1h-3zM452 338h3v1h-3zM456 338h3v1h-3zM460 338h3v1h-3zM464 338h2v1h-2zM434 339h3v1h-3zM438 339h3v1h-3zM442 339h3v1h-3zM446 339h3v1h-3zM450 339h3v1h-3zM454 339h3v1h-3zM458 339h3v1h-3zM462 339h3v1h-3z" fill="#580858"/>
<rect x="434" y="362" width="32" height="3" fill="#8c8c14"/>
<path d="M436 363h2v1h-2zM440 363h2v1h-2zM444 363h2v1h-2zM448 363h2v1h-2zM452 363h2v1h-2zM456 363h2v1h-2zM460 363h2v1h-2zM464 363h2v1h-2z" fill="#000"/><path d="M434 363h2v1h-2zM438 363h2v1h-2zM442 363h2v1h-2zM446 363h2v1h-2zM450 363h2v1h-2zM454 363h2v1h-2zM458 363h2v1h-2zM462 363h2v1h-2z" fill="#f0f070"/>
<path d="M434.5 347.5 L454.5 347.5 L454.5 352.5 L466.5 352.5" fill="none" stroke="#161678" stroke-width="1"/>
<circle cx="454.5" cy="347.5" r="2.5" fill="#161678"/>
<rect x="466.5" y="336.5" width="31" height="31" fill="#fff" stroke="#000" stroke-width="1" />
<rect x="467" y="337" width="30" height="7" fill="#8b1010" stroke="none" stroke-width="1" />
<rect x="467" y="344" width="30" height="1" fill="#f0a040" stroke="none" stroke-width="1" />
<text x="467.5" y="343.5" font-family="Liberation Sans" font-size="9" fill="#fff" font-weight="normal" font-style="normal" text-anchor="start" textLength="29" lengthAdjust="spacingAndGlyphs" >MT8860x</text>
<text x="482" y="351.5" font-family="Liberation Sans" font-size="7.5" fill="#000" font-weight="bold" font-style="normal" text-anchor="middle" letter-spacing="0.3" >MAV</text>
<text x="482" y="358.1" font-family="Liberation Sans" font-size="7.5" fill="#000" font-weight="bold" font-style="normal" text-anchor="middle" letter-spacing="0.3" >ESB</text>
<text x="468.2" y="364.7" font-family="Liberation Sans" font-size="7.5" fill="#000" font-weight="bold" font-style="normal" text-anchor="start" textLength="27.599999999999998" lengthAdjust="spacingAndGlyphs" >STATUS</text>
<circle cx="467" cy="352.5" r="1.8" fill="#e00000"/>
<path d="M498 338h1v1h-1zM500 338h3v1h-3zM504 338h3v1h-3zM508 338h3v1h-3zM512 338h3v1h-3zM516 338h3v1h-3zM520 338h3v1h-3zM524 338h3v1h-3zM528 338h3v1h-3zM532 338h3v1h-3zM536 338h3v1h-3zM540 338h3v1h-3zM544 338h3v1h-3zM548 338h3v1h-3zM552 338h3v1h-3zM556 338h3v1h-3zM560 338h3v1h-3zM564 338h3v1h-3zM568 338h3v1h-3zM572 338h3v1h-3zM576 338h3v1h-3zM580 338h3v1h-3zM584 338h3v1h-3zM588 338h3v1h-3zM592 338h3v1h-3zM596 338h3v1h-3zM600 338h3v1h-3zM604 338h3v1h-3zM608 338h3v1h-3zM612 338h3v1h-3zM616 338h3v1h-3zM620 338h3v1h-3zM624 338h3v1h-3zM628 338h3v1h-3zM632 338h3v1h-3zM636 338h3v1h-3zM640 338h3v1h-3zM644 338h3v1h-3zM648 338h1v1h-1zM498 339h3v1h-3zM502 339h3v1h-3zM506 339h3v1h-3zM510 339h3v1h-3zM514 339h3v1h-3zM518 339h3v1h-3zM522 339h3v1h-3zM526 339h3v1h-3zM530 339h3v1h-3zM534 339h3v1h-3zM538 339h3v1h-3zM542 339h3v1h-3zM546 339h3v1h-3zM550 339h3v1h-3zM554 339h3v1h-3zM558 339h3v1h-3zM562 339h3v1h-3zM566 339h3v1h-3zM570 339h3v1h-3zM574 339h3v1h-3zM578 339h3v1h-3zM582 339h3v1h-3zM586 339h3v1h-3zM590 339h3v1h-3zM594 339h3v1h-3zM598 339h3v1h-3zM602 339h3v1h-3zM606 339h3v1h-3zM610 339h3v1h-3zM614 339h3v1h-3zM618 339h3v1h-3zM622 339h3v1h-3zM626 339h3v1h-3zM630 339h3v1h-3zM634 339h3v1h-3zM638 339h3v1h-3zM642 339h3v1h-3zM646 339h3v1h-3z" fill="#580858"/>
<rect x="498" y="362" width="151" height="3" fill="#8c8c14"/>
<path d="M500 363h2v1h-2zM504 363h2v1h-2zM508 363h2v1h-2zM512 363h2v1h-2zM516 363h2v1h-2zM520 363h2v1h-2zM524 363h2v1h-2zM528 363h2v1h-2zM532 363h2v1h-2zM536 363h2v1h-2zM540 363h2v1h-2zM544 363h2v1h-2zM548 363h2v1h-2zM552 363h2v1h-2zM556 363h2v1h-2zM560 363h2v1h-2zM564 363h2v1h-2zM568 363h2v1h-2zM572 363h2v1h-2zM576 363h2v1h-2zM580 363h2v1h-2zM584 363h2v1h-2zM588 363h2v1h-2zM592 363h2v1h-2zM596 363h2v1h-2zM600 363h2v1h-2zM604 363h2v1h-2zM608 363h2v1h-2zM612 363h2v1h-2zM616 363h2v1h-2zM620 363h2v1h-2zM624 363h2v1h-2zM628 363h2v1h-2zM632 363h2v1h-2zM636 363h2v1h-2zM640 363h2v1h-2zM644 363h2v1h-2zM648 363h1v1h-1z" fill="#000"/><path d="M498 363h2v1h-2zM502 363h2v1h-2zM506 363h2v1h-2zM510 363h2v1h-2zM514 363h2v1h-2zM518 363h2v1h-2zM522 363h2v1h-2zM526 363h2v1h-2zM530 363h2v1h-2zM534 363h2v1h-2zM538 363h2v1h-2zM542 363h2v1h-2zM546 363h2v1h-2zM550 363h2v1h-2zM554 363h2v1h-2zM558 363h2v1h-2zM562 363h2v1h-2zM566 363h2v1h-2zM570 363h2v1h-2zM574 363h2v1h-2zM578 363h2v1h-2zM582 363h2v1h-2zM586 363h2v1h-2zM590 363h2v1h-2zM594 363h2v1h-2zM598 363h2v1h-2zM602 363h2v1h-2zM606 363h2v1h-2zM610 363h2v1h-2zM614 363h2v1h-2zM618 363h2v1h-2zM622 363h2v1h-2zM626 363h2v1h-2zM630 363h2v1h-2zM634 363h2v1h-2zM638 363h2v1h-2zM642 363h2v1h-2zM646 363h2v1h-2z" fill="#f0f070"/>
<path d="M498.5 348.5 L649.5 348.5" fill="none" stroke="#107010" stroke-width="1" stroke-dasharray="1 1"/>
<path d="M498.5 356.5 L649.5 356.5" fill="none" stroke="#107010" stroke-width="1" stroke-dasharray="1 1"/>
<path d="M518.5 348.5 L518.5 391.5 L524.5 391.5" fill="none" stroke="#107010" stroke-width="1" stroke-dasharray="1 1"/>
<path d="M504.5 356.5 L504.5 399.5 L525.5 399.5" fill="none" stroke="#107010" stroke-width="1" stroke-dasharray="1 1"/>
<path d="M518.5 345.5 L521.5 348.5 L518.5 351.5 L515.5 348.5Z" fill="#107010"/><rect x="518.0" y="348.0" width="1" height="1" fill="#fff"/>
<path d="M504.5 353.5 L507.5 356.5 L504.5 359.5 L501.5 356.5Z" fill="#107010"/><rect x="504.0" y="356.0" width="1" height="1" fill="#fff"/>
<path d="M524 387.5 H534.35 Q543.55 387.5 547 395.0 Q543.55 402.5 534.35 402.5 H524 Q530.9 395.0 524 387.5 Z" fill="#fffad0" stroke="#000" stroke-width="1"/>
<path d="M532.74 391.8 L536.65 398.52 L540.56 391.8" fill="none" stroke="#000" stroke-width="1.8"/>
<path d="M547.5 395.5 L551.5 395.5" fill="none" stroke="#107010" stroke-width="1" stroke-dasharray="1 1"/>
<path d="M551.5 390.5 L572 400.5 L551.5 410.5 Z" fill="#fffad0" stroke="#000" stroke-width="1"/>
<path d="M553 399 H561 M553 402.5 H561" stroke="#000" stroke-width="1.8"/>
<rect x="471.5" y="398.5" width="15" height="13" fill="#108010" stroke="#006000" stroke-width="1" />
<rect x="473.5" y="400.5" width="11" height="9" fill="none" stroke="#fff" stroke-width="1" />
<text x="479" y="409.5" font-family="Liberation Sans" font-size="9.5" fill="#fff" font-weight="bold" font-style="normal" text-anchor="middle" >T</text>
<path d="M487.5 405.5 L551.5 405.5" fill="none" stroke="#107010" stroke-width="1" stroke-dasharray="1 1"/>
<path d="M572.5 400.5 L583.5 400.5 L583.5 449.5 L587.5 449.5" fill="none" stroke="#107010" stroke-width="1" stroke-dasharray="1 1"/>
<rect x="391.0" y="431.0" width="11" height="14" fill="#fff" stroke="#0000c8" stroke-width="2" />
<text x="396.5" y="442" font-family="Liberation Sans" font-size="11" fill="#000" font-weight="normal" font-style="normal" text-anchor="middle" >3</text>
<rect x="364.0" y="461.0" width="14" height="14" fill="#fff" stroke="#0000c8" stroke-width="2" />
<text x="371" y="472.5" font-family="Liberation Sans" font-size="12" fill="#101080" font-weight="bold" font-style="normal" text-anchor="middle" >i</text>
<path d="M403.5 437.5 L409.5 437.5 L409.5 459.5 L415.5 459.5" fill="none" stroke="#161678" stroke-width="1"/>
<path d="M379.5 468.5 L415.5 468.5" fill="none" stroke="#161678" stroke-width="1"/>
<path d="M415.5 453.5 L436 463.5 L415.5 473.5 Z" fill="#fffad0" stroke="#000" stroke-width="1"/>
<path d="M423.5 460.5 L418.5 463.5 L423.5 466.5" stroke="#000" stroke-width="2" fill="none"/>
<path d="M437.5 463.5 L569.5 463.5" fill="none" stroke="#107010" stroke-width="1" stroke-dasharray="1 1"/>
<path d="M569.5 460.5 L572.5 463.5 L569.5 466.5 L566.5 463.5Z" fill="#107010"/><rect x="569.0" y="463.0" width="1" height="1" fill="#fff"/>
<path d="M569.5 463.5 L569.5 457.5 L587.5 457.5" fill="none" stroke="#107010" stroke-width="1" stroke-dasharray="1 1"/>
<path d="M569.5 463.5 L569.5 469.5 L649.5 469.5" fill="none" stroke="#107010" stroke-width="1" stroke-dasharray="1 1"/>
<path d="M586 445.5 H596.35 Q605.55 445.5 609 453.0 Q605.55 460.5 596.35 460.5 H586 Q592.9 453.0 586 445.5 Z" fill="#fffad0" stroke="#000" stroke-width="1"/>
<path d="M594.74 449.8 L598.65 456.52 L602.56 449.8" fill="none" stroke="#000" stroke-width="1.8"/>
<path d="M609.5 453.5 L615.5 453.5" fill="none" stroke="#107010" stroke-width="1" stroke-dasharray="1 1"/>
<rect x="615.5" y="445.5" width="15" height="15" fill="#f4fff4" stroke="#107010" stroke-width="1" />
<circle cx="623" cy="453" r="4.8" fill="#e00000" stroke="#500000" stroke-width="0.8"/>
<rect x="649.5" y="336.5" width="8" height="8" fill="#800080" stroke="#000" stroke-width="1" />
<rect x="649.5" y="344.5" width="8" height="8" fill="#108010" stroke="#000" stroke-width="1" />
<rect x="649.5" y="352.5" width="8" height="8" fill="#108010" stroke="#000" stroke-width="1" />
<rect x="649.5" y="360.5" width="8" height="8" fill="#808020" stroke="#000" stroke-width="1" />
<rect x="649.5" y="465.5" width="8" height="8" fill="#108010" stroke="#000" stroke-width="1" />
<path d="M658 338h1v1h-1zM660 338h3v1h-3zM664 338h3v1h-3zM668 338h3v1h-3zM672 338h3v1h-3zM676 338h3v1h-3zM680 338h3v1h-3zM684 338h3v1h-3zM688 338h3v1h-3zM692 338h3v1h-3zM696 338h3v1h-3zM700 338h3v1h-3zM704 338h3v1h-3zM708 338h3v1h-3zM712 338h3v1h-3zM716 338h3v1h-3zM720 338h3v1h-3zM724 338h3v1h-3zM728 338h3v1h-3zM732 338h3v1h-3zM736 338h3v1h-3zM740 338h3v1h-3zM744 338h3v1h-3zM748 338h3v1h-3zM752 338h3v1h-3zM756 338h3v1h-3zM760 338h3v1h-3zM764 338h3v1h-3zM768 338h3v1h-3zM772 338h3v1h-3zM776 338h3v1h-3zM780 338h3v1h-3zM784 338h3v1h-3zM788 338h3v1h-3zM792 338h3v1h-3zM796 338h3v1h-3zM800 338h3v1h-3zM804 338h3v1h-3zM808 338h3v1h-3zM812 338h3v1h-3zM816 338h3v1h-3zM820 338h3v1h-3zM824 338h3v1h-3zM828 338h3v1h-3zM832 338h3v1h-3zM836 338h3v1h-3zM840 338h3v1h-3zM844 338h3v1h-3zM848 338h3v1h-3zM852 338h3v1h-3zM856 338h3v1h-3zM860 338h3v1h-3zM864 338h3v1h-3zM868 338h3v1h-3zM872 338h3v1h-3zM876 338h3v1h-3zM880 338h3v1h-3zM884 338h3v1h-3zM888 338h3v1h-3zM892 338h3v1h-3zM896 338h3v1h-3zM900 338h3v1h-3zM904 338h3v1h-3zM908 338h3v1h-3zM912 338h3v1h-3zM916 338h3v1h-3zM920 338h3v1h-3zM924 338h3v1h-3zM928 338h3v1h-3zM932 338h3v1h-3zM936 338h3v1h-3zM940 338h3v1h-3zM944 338h3v1h-3zM948 338h3v1h-3zM952 338h3v1h-3zM956 338h3v1h-3zM960 338h3v1h-3zM964 338h3v1h-3zM968 338h3v1h-3zM972 338h3v1h-3zM976 338h3v1h-3zM980 338h3v1h-3zM984 338h3v1h-3zM988 338h3v1h-3zM992 338h3v1h-3zM996 338h3v1h-3zM1000 338h3v1h-3zM1004 338h3v1h-3zM1008 338h3v1h-3zM1012 338h3v1h-3zM1016 338h3v1h-3zM1020 338h3v1h-3zM1024 338h3v1h-3zM1028 338h3v1h-3zM1032 338h3v1h-3zM1036 338h3v1h-3zM1040 338h3v1h-3zM1044 338h3v1h-3zM1048 338h3v1h-3zM1052 338h3v1h-3zM1056 338h3v1h-3zM1060 338h3v1h-3zM1064 338h3v1h-3zM1068 338h2v1h-2zM658 339h3v1h-3zM662 339h3v1h-3zM666 339h3v1h-3zM670 339h3v1h-3zM674 339h3v1h-3zM678 339h3v1h-3zM682 339h3v1h-3zM686 339h3v1h-3zM690 339h3v1h-3zM694 339h3v1h-3zM698 339h3v1h-3zM702 339h3v1h-3zM706 339h3v1h-3zM710 339h3v1h-3zM714 339h3v1h-3zM718 339h3v1h-3zM722 339h3v1h-3zM726 339h3v1h-3zM730 339h3v1h-3zM734 339h3v1h-3zM738 339h3v1h-3zM742 339h3v1h-3zM746 339h3v1h-3zM750 339h3v1h-3zM754 339h3v1h-3zM758 339h3v1h-3zM762 339h3v1h-3zM766 339h3v1h-3zM770 339h3v1h-3zM774 339h3v1h-3zM778 339h3v1h-3zM782 339h3v1h-3zM786 339h3v1h-3zM790 339h3v1h-3zM794 339h3v1h-3zM798 339h3v1h-3zM802 339h3v1h-3zM806 339h3v1h-3zM810 339h3v1h-3zM814 339h3v1h-3zM818 339h3v1h-3zM822 339h3v1h-3zM826 339h3v1h-3zM830 339h3v1h-3zM834 339h3v1h-3zM838 339h3v1h-3zM842 339h3v1h-3zM846 339h3v1h-3zM850 339h3v1h-3zM854 339h3v1h-3zM858 339h3v1h-3zM862 339h3v1h-3zM866 339h3v1h-3zM870 339h3v1h-3zM874 339h3v1h-3zM878 339h3v1h-3zM882 339h3v1h-3zM886 339h3v1h-3zM890 339h3v1h-3zM894 339h3v1h-3zM898 339h3v1h-3zM902 339h3v1h-3zM906 339h3v1h-3zM910 339h3v1h-3zM914 339h3v1h-3zM918 339h3v1h-3zM922 339h3v1h-3zM926 339h3v1h-3zM930 339h3v1h-3zM934 339h3v1h-3zM938 339h3v1h-3zM942 339h3v1h-3zM946 339h3v1h-3zM950 339h3v1h-3zM954 339h3v1h-3zM958 339h3v1h-3zM962 339h3v1h-3zM966 339h3v1h-3zM970 339h3v1h-3zM974 339h3v1h-3zM978 339h3v1h-3zM982 339h3v1h-3zM986 339h3v1h-3zM990 339h3v1h-3zM994 339h3v1h-3zM998 339h3v1h-3zM1002 339h3v1h-3zM1006 339h3v1h-3zM1010 339h3v1h-3zM1014 339h3v1h-3zM1018 339h3v1h-3zM1022 339h3v1h-3zM1026 339h3v1h-3zM1030 339h3v1h-3zM1034 339h3v1h-3zM1038 339h3v1h-3zM1042 339h3v1h-3zM1046 339h3v1h-3zM1050 339h3v1h-3zM1054 339h3v1h-3zM1058 339h3v1h-3zM1062 339h3v1h-3zM1066 339h3v1h-3z" fill="#580858"/>
<rect x="657" y="363" width="9" height="3" fill="#8c8c14"/>
<path d="M660 364h2v1h-2zM664 364h2v1h-2z" fill="#000"/><path d="M658 364h2v1h-2zM662 364h2v1h-2z" fill="#f0f070"/>
<rect x="663" y="363" width="3" height="154" fill="#8c8c14"/>
<path d="M664 364v2h1v-2zM664 368v2h1v-2zM664 372v2h1v-2zM664 376v2h1v-2zM664 380v2h1v-2zM664 384v2h1v-2zM664 388v2h1v-2zM664 392v2h1v-2zM664 396v2h1v-2zM664 400v2h1v-2zM664 404v2h1v-2zM664 408v2h1v-2zM664 412v2h1v-2zM664 416v2h1v-2zM664 420v2h1v-2zM664 424v2h1v-2zM664 428v2h1v-2zM664 432v2h1v-2zM664 436v2h1v-2zM664 440v2h1v-2zM664 444v2h1v-2zM664 448v2h1v-2zM664 452v2h1v-2zM664 456v2h1v-2zM664 460v2h1v-2zM664 464v2h1v-2zM664 468v2h1v-2zM664 472v2h1v-2zM664 476v2h1v-2zM664 480v2h1v-2zM664 484v2h1v-2zM664 488v2h1v-2zM664 492v2h1v-2zM664 496v2h1v-2zM664 500v2h1v-2zM664 504v2h1v-2zM664 508v2h1v-2zM664 512v2h1v-2zM664 516v1h1v-1z" fill="#000"/><path d="M664 366v2h1v-2zM664 370v2h1v-2zM664 374v2h1v-2zM664 378v2h1v-2zM664 382v2h1v-2zM664 386v2h1v-2zM664 390v2h1v-2zM664 394v2h1v-2zM664 398v2h1v-2zM664 402v2h1v-2zM664 406v2h1v-2zM664 410v2h1v-2zM664 414v2h1v-2zM664 418v2h1v-2zM664 422v2h1v-2zM664 426v2h1v-2zM664 430v2h1v-2zM664 434v2h1v-2zM664 438v2h1v-2zM664 442v2h1v-2zM664 446v2h1v-2zM664 450v2h1v-2zM664 454v2h1v-2zM664 458v2h1v-2zM664 462v2h1v-2zM664 466v2h1v-2zM664 470v2h1v-2zM664 474v2h1v-2zM664 478v2h1v-2zM664 482v2h1v-2zM664 486v2h1v-2zM664 490v2h1v-2zM664 494v2h1v-2zM664 498v2h1v-2zM664 502v2h1v-2zM664 506v2h1v-2zM664 510v2h1v-2zM664 514v2h1v-2z" fill="#f0f070"/>
<rect x="663" y="514" width="77" height="3" fill="#8c8c14"/>
<path d="M664 515h2v1h-2zM668 515h2v1h-2zM672 515h2v1h-2zM676 515h2v1h-2zM680 515h2v1h-2zM684 515h2v1h-2zM688 515h2v1h-2zM692 515h2v1h-2zM696 515h2v1h-2zM700 515h2v1h-2zM704 515h2v1h-2zM708 515h2v1h-2zM712 515h2v1h-2zM716 515h2v1h-2zM720 515h2v1h-2zM724 515h2v1h-2zM728 515h2v1h-2zM732 515h2v1h-2zM736 515h2v1h-2z" fill="#000"/><path d="M666 515h2v1h-2zM670 515h2v1h-2zM674 515h2v1h-2zM678 515h2v1h-2zM682 515h2v1h-2zM686 515h2v1h-2zM690 515h2v1h-2zM694 515h2v1h-2zM698 515h2v1h-2zM702 515h2v1h-2zM706 515h2v1h-2zM710 515h2v1h-2zM714 515h2v1h-2zM718 515h2v1h-2zM722 515h2v1h-2zM726 515h2v1h-2zM730 515h2v1h-2zM734 515h2v1h-2zM738 515h2v1h-2z" fill="#f0f070"/>
<path d="M658.5 348.5 L663.5 348.5 L663.5 331.5 L1114.5 331.5 L1114.5 356.5 L1125.5 356.5" fill="none" stroke="#107010" stroke-width="1" stroke-dasharray="1 1"/>
<path d="M658.5 357.5 L675.5 357.5" fill="none" stroke="#107010" stroke-width="1" stroke-dasharray="1 1"/>
<path d="M675.5 354.5 L678.5 357.5 L675.5 360.5 L672.5 357.5Z" fill="#107010"/><rect x="675.0" y="357.0" width="1" height="1" fill="#fff"/>
<path d="M675.5 352.5 L1070.5 352.5" fill="none" stroke="#107010" stroke-width="1" stroke-dasharray="1 1"/>
<path d="M675.5 357.5 L675.5 447.5 L709.5 447.5" fill="none" stroke="#107010" stroke-width="1" stroke-dasharray="1 1"/>
<path d="M658.5 469.5 L672.5 469.5" fill="none" stroke="#107010" stroke-width="1" stroke-dasharray="1 1"/>
<path d="M673.5 461.5 L693 469.0 L673.5 476.5 Z" fill="#fffad0" stroke="#000" stroke-width="1"/>
<path d="M679 467.5 H684 V471" stroke="#000" stroke-width="1.2" fill="none"/>
<circle cx="672" cy="469.5" r="2" fill="#fff" stroke="#000"/>
<path d="M693.5 469.5 L703.5 469.5 L703.5 456.5 L709.5 456.5" fill="none" stroke="#107010" stroke-width="1" stroke-dasharray="1 1"/>
<path d="M709 444.5 H718.9 Q727.7 444.5 731 452.0 Q727.7 459.5 718.9 459.5 H709 Q715.6 452.0 709 444.5 Z" fill="#fffad0" stroke="#000" stroke-width="1"/>
<path d="M717.36 448.8 L721.1 455.52 L724.84 448.8" fill="none" stroke="#000" stroke-width="1.8"/>
<path d="M731.5 452.5 L738.5 452.5" fill="none" stroke="#107010" stroke-width="1" stroke-dasharray="1 1"/>
<rect x="739" y="381" width="305" height="5" fill="url(#bh5)"/>
<rect x="739" y="611" width="305" height="5" fill="url(#bh6)"/>
<rect x="739" y="386" width="5" height="225" fill="url(#bv7)"/>
<rect x="1039" y="386" width="5" height="225" fill="url(#bv8)"/>
<rect x="738.5" y="380.5" width="306" height="236" fill="none" stroke="#000" stroke-width="1" />
<rect x="738.5" y="446.5" width="7" height="11" fill="#fff" stroke="#30a030" stroke-width="1" />
<text x="742" y="456" font-family="Liberation Sans" font-size="10" fill="#30a030" font-weight="normal" font-style="normal" text-anchor="middle" >?</text>
<rect x="860.5" y="380.5" width="61" height="13" fill="#fff" stroke="#000" stroke-width="1" />
<path d="M868.5 381 V393 M913.5 381 V393" stroke="#000"/>
<path d="M867.5 382 V392 L861.5 387Z M914.5 382 V392 L920.5 387Z" fill="#000"/>
<text x="871" y="392" font-family="Liberation Sans" font-size="11" fill="#000" font-weight="normal" font-style="normal" text-anchor="start" >False</text>
<path d="M902 385 H909 L905.5 389Z" fill="#000"/>
<rect x="738.5" y="511.5" width="8" height="8" fill="#808020" stroke="#000" stroke-width="1" />
<rect x="1036.5" y="511.5" width="8" height="8" fill="#808020" stroke="#000" stroke-width="1" />
<rect x="783.5" y="399.5" width="134" height="52" fill="#ffffe0" stroke="#000" stroke-width="1" />
<text x="785" y="411" font-family="Liberation Sans" font-size="11" fill="#000" font-weight="normal" font-style="normal" text-anchor="start" textLength="129" lengthAdjust="spacingAndGlyphs" >If MAV bit is FALSE, or loop</text>
<text x="785" y="424" font-family="Liberation Sans" font-size="11" fill="#000" font-weight="normal" font-style="normal" text-anchor="start" textLength="46" lengthAdjust="spacingAndGlyphs" >count &gt; 3</text>
<text x="785" y="437" font-family="Liberation Sans" font-size="11" fill="#000" font-weight="normal" font-style="normal" text-anchor="start" textLength="114" lengthAdjust="spacingAndGlyphs" >something is wrong with</text>
<text x="785" y="450" font-family="Liberation Sans" font-size="11" fill="#000" font-weight="normal" font-style="normal" text-anchor="start" textLength="111" lengthAdjust="spacingAndGlyphs" >SRQ events generation</text>
<rect x="778" y="461" width="73" height="15" fill="#fff" stroke="#1010c0" stroke-width="2" />
<text x="780" y="472" font-family="Liberation Sans" font-size="8" fill="#1010c0" font-weight="normal" font-style="normal" text-anchor="start" >d</text>
<text x="785" y="473" font-family="Liberation Sans" font-size="11" fill="#000" font-weight="normal" font-style="normal" text-anchor="start" textLength="63" lengthAdjust="spacingAndGlyphs" >-1074000000</text>
<path d="M852.5 475.5 L874.5 475.5" fill="none" stroke="#161678" stroke-width="1"/>
<rect x="871.5" y="453.5" width="14" height="13" fill="#108010" stroke="#006000" stroke-width="1" />
<rect x="873.5" y="455.5" width="10" height="9" fill="none" stroke="#fff" stroke-width="1" />
<text x="878.5" y="464.5" font-family="Liberation Sans" font-size="9.5" fill="#fff" font-weight="bold" font-style="normal" text-anchor="middle" >T</text>
<path d="M886.5 460.5 L886.5 471.5" fill="none" stroke="#107010" stroke-width="1" stroke-dasharray="1 1"/>
<rect x="874.5" y="471.5" width="31" height="31" fill="#fff" stroke="#000" stroke-width="1" />
<text x="876" y="483" font-family="Liberation Sans" font-size="11" fill="#1030c0" font-weight="bold" font-style="normal" text-anchor="start" >#</text>
<path d="M885 477 L893 485 M893 480 V485 H888" stroke="#000" stroke-width="2" fill="none"/>
<text x="892" y="495" font-family="Liberation Sans" font-size="10" fill="#000" font-weight="bold" font-style="normal" text-anchor="start" >?!</text>
<text x="876" y="501" font-family="Liberation Sans" font-size="10" fill="#000" font-weight="bold" font-style="normal" text-anchor="start" >?!</text>
<path d="M886 499 L893 492 M888 492 H893 V497" stroke="#000" stroke-width="2" fill="none"/>
<path d="M872 481h3v1h-3zM871 482h2v1h-2zM874 482h1v1h-1z" fill="#d020d0"/>
<path d="M870 482v1h1v-1zM870 484v3h1v-3zM870 488v3h1v-3zM870 492v3h1v-3zM870 496v3h1v-3zM870 500v3h1v-3zM870 504v3h1v-3zM870 508v3h1v-3zM870 512v3h1v-3zM870 516v3h1v-3zM870 520v3h1v-3zM870 524v3h1v-3zM870 528v3h1v-3zM870 532v3h1v-3zM870 536v3h1v-3zM870 540v3h1v-3zM870 544v3h1v-3zM870 548v3h1v-3zM870 552v1h1v-1zM871 482v3h1v-3zM871 486v3h1v-3zM871 490v3h1v-3zM871 494v3h1v-3zM871 498v3h1v-3zM871 502v3h1v-3zM871 506v3h1v-3zM871 510v3h1v-3zM871 514v3h1v-3zM871 518v3h1v-3zM871 522v3h1v-3zM871 526v3h1v-3zM871 530v3h1v-3zM871 534v3h1v-3zM871 538v3h1v-3zM871 542v3h1v-3zM871 546v3h1v-3zM871 550v3h1v-3z" fill="#d020d0"/>
<rect x="749" y="553" width="244" height="41" fill="#fff" stroke="#e020e0" stroke-width="2" />
<text x="752" y="565.5" font-family="Liberation Sans" font-size="11" fill="#000" font-weight="normal" font-style="normal" text-anchor="start" textLength="220" lengthAdjust="spacingAndGlyphs" >Instrument reports: Service Request Timeout.</text>
<text x="752" y="578.2" font-family="Liberation Sans" font-size="11" fill="#000" font-weight="normal" font-style="normal" text-anchor="start" textLength="238" lengthAdjust="spacingAndGlyphs" >The expected message was not found in the GPIB</text>
<text x="752" y="590.9" font-family="Liberation Sans" font-size="11" fill="#000" font-weight="normal" font-style="normal" text-anchor="start" textLength="67" lengthAdjust="spacingAndGlyphs" >output queue.</text>
<rect x="747" y="514" width="236" height="3" fill="#8c8c14"/>
<path d="M748 515h2v1h-2zM752 515h2v1h-2zM756 515h2v1h-2zM760 515h2v1h-2zM764 515h2v1h-2zM768 515h2v1h-2zM772 515h2v1h-2zM776 515h2v1h-2zM780 515h2v1h-2zM784 515h2v1h-2zM788 515h2v1h-2zM792 515h2v1h-2zM796 515h2v1h-2zM800 515h2v1h-2zM804 515h2v1h-2zM808 515h2v1h-2zM812 515h2v1h-2zM816 515h2v1h-2zM820 515h2v1h-2zM824 515h2v1h-2zM828 515h2v1h-2zM832 515h2v1h-2zM836 515h2v1h-2zM840 515h2v1h-2zM844 515h2v1h-2zM848 515h2v1h-2zM852 515h2v1h-2zM856 515h2v1h-2zM860 515h2v1h-2zM864 515h2v1h-2zM868 515h2v1h-2zM872 515h2v1h-2zM876 515h2v1h-2zM880 515h2v1h-2zM884 515h2v1h-2zM888 515h2v1h-2zM892 515h2v1h-2zM896 515h2v1h-2zM900 515h2v1h-2zM904 515h2v1h-2zM908 515h2v1h-2zM912 515h2v1h-2zM916 515h2v1h-2zM920 515h2v1h-2zM924 515h2v1h-2zM928 515h2v1h-2zM932 515h2v1h-2zM936 515h2v1h-2zM940 515h2v1h-2zM944 515h2v1h-2zM948 515h2v1h-2zM952 515h2v1h-2zM956 515h2v1h-2zM960 515h2v1h-2zM964 515h2v1h-2zM968 515h2v1h-2zM972 515h2v1h-2zM976 515h2v1h-2zM980 515h2v1h-2z" fill="#000"/><path d="M750 515h2v1h-2zM754 515h2v1h-2zM758 515h2v1h-2zM762 515h2v1h-2zM766 515h2v1h-2zM770 515h2v1h-2zM774 515h2v1h-2zM778 515h2v1h-2zM782 515h2v1h-2zM786 515h2v1h-2zM790 515h2v1h-2zM794 515h2v1h-2zM798 515h2v1h-2zM802 515h2v1h-2zM806 515h2v1h-2zM810 515h2v1h-2zM814 515h2v1h-2zM818 515h2v1h-2zM822 515h2v1h-2zM826 515h2v1h-2zM830 515h2v1h-2zM834 515h2v1h-2zM838 515h2v1h-2zM842 515h2v1h-2zM846 515h2v1h-2zM850 515h2v1h-2zM854 515h2v1h-2zM858 515h2v1h-2zM862 515h2v1h-2zM866 515h2v1h-2zM870 515h2v1h-2zM874 515h2v1h-2zM878 515h2v1h-2zM882 515h2v1h-2zM886 515h2v1h-2zM890 515h2v1h-2zM894 515h2v1h-2zM898 515h2v1h-2zM902 515h2v1h-2zM906 515h2v1h-2zM910 515h2v1h-2zM914 515h2v1h-2zM918 515h2v1h-2zM922 515h2v1h-2zM926 515h2v1h-2zM930 515h2v1h-2zM934 515h2v1h-2zM938 515h2v1h-2zM942 515h2v1h-2zM946 515h2v1h-2zM950 515h2v1h-2zM954 515h2v1h-2zM958 515h2v1h-2zM962 515h2v1h-2zM966 515h2v1h-2zM970 515h2v1h-2zM974 515h2v1h-2zM978 515h2v1h-2zM982 515h1v1h-1z" fill="#f0f070"/>
<rect x="905" y="498" width="48" height="3" fill="#8c8c14"/>
<path d="M908 499h2v1h-2zM912 499h2v1h-2zM916 499h2v1h-2zM920 499h2v1h-2zM924 499h2v1h-2zM928 499h2v1h-2zM932 499h2v1h-2zM936 499h2v1h-2zM940 499h2v1h-2zM944 499h2v1h-2zM948 499h2v1h-2zM952 499h1v1h-1z" fill="#000"/><path d="M906 499h2v1h-2zM910 499h2v1h-2zM914 499h2v1h-2zM918 499h2v1h-2zM922 499h2v1h-2zM926 499h2v1h-2zM930 499h2v1h-2zM934 499h2v1h-2zM938 499h2v1h-2zM942 499h2v1h-2zM946 499h2v1h-2zM950 499h2v1h-2z" fill="#f0f070"/>
<rect x="950" y="498" width="3" height="11" fill="#8c8c14"/>
<path d="M951 500v2h1v-2zM951 504v2h1v-2zM951 508v1h1v-1z" fill="#000"/><path d="M951 498v2h1v-2zM951 502v2h1v-2zM951 506v2h1v-2z" fill="#f0f070"/>
<rect x="950" y="506" width="44" height="3" fill="#8c8c14"/>
<path d="M952 507h2v1h-2zM956 507h2v1h-2zM960 507h2v1h-2zM964 507h2v1h-2zM968 507h2v1h-2zM972 507h2v1h-2zM976 507h2v1h-2zM980 507h2v1h-2zM984 507h2v1h-2zM988 507h2v1h-2zM992 507h2v1h-2z" fill="#000"/><path d="M950 507h2v1h-2zM954 507h2v1h-2zM958 507h2v1h-2zM962 507h2v1h-2zM966 507h2v1h-2zM970 507h2v1h-2zM974 507h2v1h-2zM978 507h2v1h-2zM982 507h2v1h-2zM986 507h2v1h-2zM990 507h2v1h-2z" fill="#f0f070"/>
<rect x="982" y="498" width="3" height="19" fill="#8c8c14"/>
<path d="M983 500v2h1v-2zM983 504v2h1v-2zM983 508v2h1v-2zM983 512v2h1v-2zM983 516v1h1v-1z" fill="#000"/><path d="M983 498v2h1v-2zM983 502v2h1v-2zM983 506v2h1v-2zM983 510v2h1v-2zM983 514v2h1v-2z" fill="#f0f070"/>
<rect x="982" y="498" width="12" height="3" fill="#8c8c14"/>
<path d="M984 499h2v1h-2zM988 499h2v1h-2zM992 499h2v1h-2z" fill="#000"/><path d="M982 499h2v1h-2zM986 499h2v1h-2zM990 499h2v1h-2z" fill="#f0f070"/>
<rect x="992.5" y="494.5" width="20" height="17" fill="#ffffe0" stroke="#000" stroke-width="1" />
<rect x="1012.5" y="494.5" width="11" height="17" fill="#ffffe0" stroke="#000" stroke-width="1" />
<text x="994" y="502" font-family="Liberation Sans" font-size="7" font-weight="bold">?!</text><path d="M1002 499.5 H1009 M1007 497.5 L1009 499.5 L1007 501.5" stroke="#000"/>
<text x="994" y="510" font-family="Liberation Sans" font-size="7" font-weight="bold">?!</text><path d="M1002 506.5 H1009 M1007 504.5 L1009 506.5 L1007 508.5" stroke="#000"/>
<text x="1014" y="506" font-family="Liberation Sans" font-size="7" font-weight="bold">?!</text>
<rect x="1023" y="502" width="8" height="3" fill="#8c8c14"/>
<path d="M1024 503h2v1h-2zM1028 503h2v1h-2z" fill="#000"/><path d="M1026 503h2v1h-2zM1030 503h1v1h-1z" fill="#f0f070"/>
<rect x="1028" y="502" width="3" height="15" fill="#8c8c14"/>
<path d="M1029 504v2h1v-2zM1029 508v2h1v-2zM1029 512v2h1v-2zM1029 516v1h1v-1z" fill="#000"/><path d="M1029 502v2h1v-2zM1029 506v2h1v-2zM1029 510v2h1v-2zM1029 514v2h1v-2z" fill="#f0f070"/>
<rect x="1028" y="514" width="10" height="3" fill="#8c8c14"/>
<path d="M1028 515h2v1h-2zM1032 515h2v1h-2zM1036 515h2v1h-2z" fill="#000"/><path d="M1030 515h2v1h-2zM1034 515h2v1h-2z" fill="#f0f070"/>
<rect x="1044" y="514" width="26" height="3" fill="#8c8c14"/>
<path d="M1044 515h2v1h-2zM1048 515h2v1h-2zM1052 515h2v1h-2zM1056 515h2v1h-2zM1060 515h2v1h-2zM1064 515h2v1h-2zM1068 515h2v1h-2z" fill="#000"/><path d="M1046 515h2v1h-2zM1050 515h2v1h-2zM1054 515h2v1h-2zM1058 515h2v1h-2zM1062 515h2v1h-2zM1066 515h2v1h-2z" fill="#f0f070"/>
<rect x="1067" y="363" width="3" height="154" fill="#8c8c14"/>
<path d="M1068 364v2h1v-2zM1068 368v2h1v-2zM1068 372v2h1v-2zM1068 376v2h1v-2zM1068 380v2h1v-2zM1068 384v2h1v-2zM1068 388v2h1v-2zM1068 392v2h1v-2zM1068 396v2h1v-2zM1068 400v2h1v-2zM1068 404v2h1v-2zM1068 408v2h1v-2zM1068 412v2h1v-2zM1068 416v2h1v-2zM1068 420v2h1v-2zM1068 424v2h1v-2zM1068 428v2h1v-2zM1068 432v2h1v-2zM1068 436v2h1v-2zM1068 440v2h1v-2zM1068 444v2h1v-2zM1068 448v2h1v-2zM1068 452v2h1v-2zM1068 456v2h1v-2zM1068 460v2h1v-2zM1068 464v2h1v-2zM1068 468v2h1v-2zM1068 472v2h1v-2zM1068 476v2h1v-2zM1068 480v2h1v-2zM1068 484v2h1v-2zM1068 488v2h1v-2zM1068 492v2h1v-2zM1068 496v2h1v-2zM1068 500v2h1v-2zM1068 504v2h1v-2zM1068 508v2h1v-2zM1068 512v2h1v-2zM1068 516v1h1v-1z" fill="#000"/><path d="M1068 366v2h1v-2zM1068 370v2h1v-2zM1068 374v2h1v-2zM1068 378v2h1v-2zM1068 382v2h1v-2zM1068 386v2h1v-2zM1068 390v2h1v-2zM1068 394v2h1v-2zM1068 398v2h1v-2zM1068 402v2h1v-2zM1068 406v2h1v-2zM1068 410v2h1v-2zM1068 414v2h1v-2zM1068 418v2h1v-2zM1068 422v2h1v-2zM1068 426v2h1v-2zM1068 430v2h1v-2zM1068 434v2h1v-2zM1068 438v2h1v-2zM1068 442v2h1v-2zM1068 446v2h1v-2zM1068 450v2h1v-2zM1068 454v2h1v-2zM1068 458v2h1v-2zM1068 462v2h1v-2zM1068 466v2h1v-2zM1068 470v2h1v-2zM1068 474v2h1v-2zM1068 478v2h1v-2zM1068 482v2h1v-2zM1068 486v2h1v-2zM1068 490v2h1v-2zM1068 494v2h1v-2zM1068 498v2h1v-2zM1068 502v2h1v-2zM1068 506v2h1v-2zM1068 510v2h1v-2zM1068 514v2h1v-2z" fill="#f0f070"/>
<rect x="1067" y="363" width="5" height="3" fill="#8c8c14"/>
<path d="M1068 364h2v1h-2z" fill="#000"/><path d="M1070 364h2v1h-2z" fill="#f0f070"/>
<rect x="1070.5" y="336.5" width="31" height="31" fill="#fff" stroke="#000" stroke-width="1" />
<rect x="1071" y="337" width="30" height="7" fill="#8b1010" stroke="none" stroke-width="1" />
<rect x="1071" y="344" width="30" height="1" fill="#f0a040" stroke="none" stroke-width="1" />
<text x="1071.5" y="343.5" font-family="Liberation Sans" font-size="9" fill="#fff" font-weight="normal" font-style="normal" text-anchor="start" textLength="29" lengthAdjust="spacingAndGlyphs" >MT8860x</text>
<text x="1086" y="351.5" font-family="Liberation Sans" font-size="7.5" fill="#000" font-weight="bold" font-style="normal" text-anchor="middle" letter-spacing="0.3" >READ</text>
<text x="1086" y="358.1" font-family="Liberation Sans" font-size="7.5" fill="#000" font-weight="bold" font-style="normal" text-anchor="middle" letter-spacing="0.3" >MAV</text>
<text x="1086" y="364.7" font-family="Liberation Sans" font-size="7.5" fill="#000" font-weight="bold" font-style="normal" text-anchor="middle" letter-spacing="0.3" >DATA</text>
<rect x="1125.5" y="336.5" width="31" height="31" fill="#fff" stroke="#000" stroke-width="1" />
<rect x="1126" y="337" width="30" height="7" fill="#8b1010" stroke="none" stroke-width="1" />
<rect x="1126" y="344" width="30" height="1" fill="#f0a040" stroke="none" stroke-width="1" />
<text x="1126.5" y="343.5" font-family="Liberation Sans" font-size="9" fill="#fff" font-weight="normal" font-style="normal" text-anchor="start" textLength="29" lengthAdjust="spacingAndGlyphs" >MT8860x</text>
<text x="1129.5" y="351.5" font-family="Liberation Sans" font-size="7.5" fill="#000" font-weight="bold" font-style="normal" text-anchor="start" textLength="23.0" lengthAdjust="spacingAndGlyphs" >QUERY</text>
<text x="1129.5" y="358.1" font-family="Liberation Sans" font-size="7.5" fill="#000" font-weight="bold" font-style="normal" text-anchor="start" textLength="23.0" lengthAdjust="spacingAndGlyphs" >INSTR</text>
<text x="1127.2" y="364.7" font-family="Liberation Sans" font-size="7.5" fill="#000" font-weight="bold" font-style="normal" text-anchor="start" textLength="27.599999999999998" lengthAdjust="spacingAndGlyphs" >ERRORS</text>
<path d="M1102 338h1v1h-1zM1104 338h3v1h-3zM1108 338h3v1h-3zM1112 338h3v1h-3zM1116 338h3v1h-3zM1120 338h3v1h-3zM1124 338h1v1h-1zM1102 339h3v1h-3zM1106 339h3v1h-3zM1110 339h3v1h-3zM1114 339h3v1h-3zM1118 339h3v1h-3zM1122 339h3v1h-3z" fill="#580858"/>
<rect x="1102" y="363" width="23" height="3" fill="#8c8c14"/>
<path d="M1104 364h2v1h-2zM1108 364h2v1h-2zM1112 364h2v1h-2zM1116 364h2v1h-2zM1120 364h2v1h-2zM1124 364h1v1h-1z" fill="#000"/><path d="M1102 364h2v1h-2zM1106 364h2v1h-2zM1110 364h2v1h-2zM1114 364h2v1h-2zM1118 364h2v1h-2zM1122 364h2v1h-2z" fill="#f0f070"/>
<path d="M1157 338h2v1h-2zM1160 338h3v1h-3zM1164 338h3v1h-3zM1168 338h3v1h-3zM1172 338h3v1h-3zM1176 338h3v1h-3zM1180 338h3v1h-3zM1184 338h3v1h-3zM1188 338h3v1h-3zM1192 338h3v1h-3zM1196 338h1v1h-1zM1158 339h3v1h-3zM1162 339h3v1h-3zM1166 339h3v1h-3zM1170 339h3v1h-3zM1174 339h3v1h-3zM1178 339h3v1h-3zM1182 339h3v1h-3zM1186 339h3v1h-3zM1190 339h3v1h-3zM1194 339h3v1h-3z" fill="#580858"/>
<rect x="1157" y="363" width="40" height="3" fill="#8c8c14"/>
<path d="M1160 364h2v1h-2zM1164 364h2v1h-2zM1168 364h2v1h-2zM1172 364h2v1h-2zM1176 364h2v1h-2zM1180 364h2v1h-2zM1184 364h2v1h-2zM1188 364h2v1h-2zM1192 364h2v1h-2zM1196 364h1v1h-1z" fill="#000"/><path d="M1158 364h2v1h-2zM1162 364h2v1h-2zM1166 364h2v1h-2zM1170 364h2v1h-2zM1174 364h2v1h-2zM1178 364h2v1h-2zM1182 364h2v1h-2zM1186 364h2v1h-2zM1190 364h2v1h-2zM1194 364h2v1h-2z" fill="#f0f070"/>
<path d="M1157.5 356.5 L1168.5 356.5 L1168.5 319.5 L1197.5 319.5" fill="none" stroke="#107010" stroke-width="1" stroke-dasharray="1 1"/>
<path d="M1206.5 319.5 L1262.5 319.5" fill="none" stroke="#107010" stroke-width="1" stroke-dasharray="1 1"/>
<path d="M1157.5 347.5 L1159.5 347.5 L1159.5 301.5 L1262.5 301.5" fill="none" stroke="#161678" stroke-width="1"/>
<path d="M1102 355h1v1h-1zM1104 355h3v1h-3zM1102 356h3v1h-3zM1106 356h2v1h-2z" fill="#d020d0"/>
<path d="M1106 188v3h1v-3zM1106 192v3h1v-3zM1106 196v3h1v-3zM1106 200v3h1v-3zM1106 204v3h1v-3zM1106 208v3h1v-3zM1106 212v3h1v-3zM1106 216v3h1v-3zM1106 220v3h1v-3zM1106 224v3h1v-3zM1106 228v3h1v-3zM1106 232v3h1v-3zM1106 236v3h1v-3zM1106 240v3h1v-3zM1106 244v3h1v-3zM1106 248v3h1v-3zM1106 252v3h1v-3zM1106 256v3h1v-3zM1106 260v3h1v-3zM1106 264v3h1v-3zM1106 268v3h1v-3zM1106 272v3h1v-3zM1106 276v3h1v-3zM1106 280v3h1v-3zM1106 284v3h1v-3zM1106 288v3h1v-3zM1106 292v3h1v-3zM1106 296v3h1v-3zM1106 300v3h1v-3zM1106 304v3h1v-3zM1106 308v3h1v-3zM1106 312v3h1v-3zM1106 316v3h1v-3zM1106 320v3h1v-3zM1106 324v3h1v-3zM1106 328v3h1v-3zM1106 332v3h1v-3zM1106 336v3h1v-3zM1106 340v3h1v-3zM1106 344v3h1v-3zM1106 348v3h1v-3zM1106 352v3h1v-3zM1106 356v1h1v-1zM1107 187v2h1v-2zM1107 190v3h1v-3zM1107 194v3h1v-3zM1107 198v3h1v-3zM1107 202v3h1v-3zM1107 206v3h1v-3zM1107 210v3h1v-3zM1107 214v3h1v-3zM1107 218v3h1v-3zM1107 222v3h1v-3zM1107 226v3h1v-3zM1107 230v3h1v-3zM1107 234v3h1v-3zM1107 238v3h1v-3zM1107 242v3h1v-3zM1107 246v3h1v-3zM1107 250v3h1v-3zM1107 254v3h1v-3zM1107 258v3h1v-3zM1107 262v3h1v-3zM1107 266v3h1v-3zM1107 270v3h1v-3zM1107 274v3h1v-3zM1107 278v3h1v-3zM1107 282v3h1v-3zM1107 286v3h1v-3zM1107 290v3h1v-3zM1107 294v3h1v-3zM1107 298v3h1v-3zM1107 302v3h1v-3zM1107 306v3h1v-3zM1107 310v3h1v-3zM1107 314v3h1v-3zM1107 318v3h1v-3zM1107 322v3h1v-3zM1107 326v3h1v-3zM1107 330v3h1v-3zM1107 334v3h1v-3zM1107 338v3h1v-3zM1107 342v3h1v-3zM1107 346v3h1v-3zM1107 350v3h1v-3zM1107 354v3h1v-3z" fill="#d020d0"/>
<path d="M1108 186h3v1h-3zM1112 186h3v1h-3zM1116 186h3v1h-3zM1120 186h3v1h-3zM1124 186h3v1h-3zM1128 186h3v1h-3zM1132 186h3v1h-3zM1136 186h3v1h-3zM1140 186h3v1h-3zM1144 186h3v1h-3zM1148 186h3v1h-3zM1152 186h3v1h-3zM1156 186h3v1h-3zM1160 186h3v1h-3zM1164 186h3v1h-3zM1168 186h3v1h-3zM1172 186h3v1h-3zM1176 186h3v1h-3zM1180 186h3v1h-3zM1184 186h3v1h-3zM1188 186h3v1h-3zM1192 186h3v1h-3zM1196 186h3v1h-3zM1200 186h3v1h-3zM1204 186h3v1h-3zM1208 186h3v1h-3zM1212 186h3v1h-3zM1216 186h3v1h-3zM1220 186h3v1h-3zM1224 186h3v1h-3zM1228 186h3v1h-3zM1232 186h3v1h-3zM1236 186h3v1h-3zM1240 186h3v1h-3zM1244 186h3v1h-3zM1248 186h3v1h-3zM1252 186h3v1h-3zM1256 186h3v1h-3zM1260 186h2v1h-2zM1107 187h2v1h-2zM1110 187h3v1h-3zM1114 187h3v1h-3zM1118 187h3v1h-3zM1122 187h3v1h-3zM1126 187h3v1h-3zM1130 187h3v1h-3zM1134 187h3v1h-3zM1138 187h3v1h-3zM1142 187h3v1h-3zM1146 187h3v1h-3zM1150 187h3v1h-3zM1154 187h3v1h-3zM1158 187h3v1h-3zM1162 187h3v1h-3zM1166 187h3v1h-3zM1170 187h3v1h-3zM1174 187h3v1h-3zM1178 187h3v1h-3zM1182 187h3v1h-3zM1186 187h3v1h-3zM1190 187h3v1h-3zM1194 187h3v1h-3zM1198 187h3v1h-3zM1202 187h3v1h-3zM1206 187h3v1h-3zM1210 187h3v1h-3zM1214 187h3v1h-3zM1218 187h3v1h-3zM1222 187h3v1h-3zM1226 187h3v1h-3zM1230 187h3v1h-3zM1234 187h3v1h-3zM1238 187h3v1h-3zM1242 187h3v1h-3zM1246 187h3v1h-3zM1250 187h3v1h-3zM1254 187h3v1h-3zM1258 187h3v1h-3z" fill="#d020d0"/>
<path d="M1108 209h3v1h-3zM1112 209h3v1h-3zM1116 209h3v1h-3zM1120 209h3v1h-3zM1124 209h3v1h-3zM1128 209h3v1h-3zM1107 210h2v1h-2zM1110 210h3v1h-3zM1114 210h3v1h-3zM1118 210h3v1h-3zM1122 210h3v1h-3zM1126 210h3v1h-3zM1130 210h2v1h-2z" fill="#d020d0"/>
<circle cx="1107.5" cy="210.5" r="2.5" fill="none" stroke="#ff30ff" stroke-width="1.5"/>
<rect x="1164" y="209" width="98" height="3" fill="#ff30ff"/>
<path d="M1166 210h3v1h-3zM1172 210h3v1h-3zM1178 210h3v1h-3zM1184 210h3v1h-3zM1190 210h3v1h-3zM1196 210h3v1h-3zM1202 210h3v1h-3zM1208 210h3v1h-3zM1214 210h3v1h-3zM1220 210h3v1h-3zM1226 210h3v1h-3zM1232 210h3v1h-3zM1238 210h3v1h-3zM1244 210h3v1h-3zM1250 210h3v1h-3zM1256 210h3v1h-3z" fill="#fff"/>
<rect x="1132.5" y="194.5" width="31" height="31" fill="#fff" stroke="#000" stroke-width="1" />
<rect x="1133" y="195" width="30" height="7" fill="#8b1010" stroke="none" stroke-width="1" />
<rect x="1133" y="202" width="30" height="1" fill="#f0a040" stroke="none" stroke-width="1" />
<text x="1133.5" y="201.5" font-family="Liberation Sans" font-size="9" fill="#fff" font-weight="normal" font-style="normal" text-anchor="start" textLength="29" lengthAdjust="spacingAndGlyphs" >MT8860x</text>
<rect x="1134" y="210" width="11" height="7" fill="#202020"/><rect x="1137" y="211" width="2" height="5" fill="#80e080"/><rect x="1140" y="211" width="4" height="5" fill="#2040c0"/>
<path d="M1146 206.5 H1151 M1149 204.5 L1151 206.5 L1149 208.5 M1146 213.5 H1151 M1149 211.5 L1151 213.5 L1149 215.5 M1146 220.5 H1151 M1149 218.5 L1151 220.5 L1149 222.5" stroke="#000" stroke-width="1.2" fill="none"/>
<path d="M1153.5 204 V224" stroke="#000"/><rect x="1155.5" y="207.5" width="6" height="3" fill="#f0a040" stroke="#000"/><rect x="1155.5" y="212.5" width="6" height="3" fill="#80e060" stroke="#000"/><rect x="1155.5" y="217.5" width="6" height="3" fill="#2040d0" stroke="#000"/>
<rect x="1197.5" y="183.5" width="8" height="8" fill="#ff20ff" stroke="#000" stroke-width="1" />
<rect x="1197.5" y="206.5" width="8" height="8" fill="#ff20ff" stroke="#000" stroke-width="1" />
<rect x="1197.5" y="273.5" width="8" height="8" fill="#1020e0" stroke="#000" stroke-width="1" />
<rect x="1197.5" y="297.5" width="8" height="8" fill="#1020e0" stroke="#000" stroke-width="1" />
<rect x="1197.5" y="315.5" width="8" height="8" fill="#108010" stroke="#000" stroke-width="1" />
<rect x="1197.5" y="336.5" width="8" height="7" fill="#800080" stroke="#000" stroke-width="1" />
<rect x="1197.5" y="359.5" width="8" height="8" fill="#808020" stroke="#000" stroke-width="1" />
<path d="M1206 338h1v1h-1zM1208 338h3v1h-3zM1212 338h3v1h-3zM1216 338h2v1h-2zM1206 339h3v1h-3zM1210 339h3v1h-3zM1214 339h3v1h-3z" fill="#580858"/>
<rect x="1206" y="363" width="12" height="3" fill="#8c8c14"/>
<path d="M1208 364h2v1h-2zM1212 364h2v1h-2zM1216 364h2v1h-2z" fill="#000"/><path d="M1206 364h2v1h-2zM1210 364h2v1h-2zM1214 364h2v1h-2z" fill="#f0f070"/>
<rect x="1218.5" y="337.5" width="31" height="31" fill="#ffffd8" stroke="#000" stroke-width="1" />
<text x="1220" y="346" font-family="Liberation Sans" font-size="9" fill="#000" font-weight="normal" font-style="italic" text-anchor="start" letter-spacing="-0.3" stroke="#000" stroke-width="0.25">VISA</text>
<path d="M1227.5 351 L1231 354.5 L1227.5 358 L1224 354.5Z" fill="#000"/><path d="M1227.5 349 V360 M1231 354.5 H1240 M1238 352.5 L1240 354.5 L1238 356.5" stroke="#000" fill="none"/><circle cx="1244" cy="354.5" r="2" fill="none" stroke="#000"/>
<path d="M1250 338h1v1h-1zM1252 338h3v1h-3zM1256 338h3v1h-3zM1260 338h2v1h-2zM1250 339h3v1h-3zM1254 339h3v1h-3zM1258 339h3v1h-3z" fill="#580858"/>
<rect x="1250" y="363" width="12" height="3" fill="#8c8c14"/>
<path d="M1252 364h2v1h-2zM1256 364h2v1h-2zM1260 364h2v1h-2z" fill="#000"/><path d="M1250 364h2v1h-2zM1254 364h2v1h-2zM1258 364h2v1h-2z" fill="#f0f070"/></g></svg>
<!--/diagram-->

<!-- vertical scrollbar -->
<div class="a" style="left:1262px;top:66px;width:16px;height:910px;background:repeating-conic-gradient(#d4d0c8 0 25%,#fff 0 50%) 0 0/2px 2px"></div>
<div class="a" style="left:1262px;top:66px;width:16px;height:16px;background:#d4d0c8;border-top:1px solid #d4d0c8;border-left:1px solid #d4d0c8;border-right:1px solid #404040;border-bottom:1px solid #404040;box-shadow:inset 1px 1px #fff,inset -1px -1px #808080"></div>
<svg class="a" style="left:1266px;top:72px" width="8" height="5"><path d="M0 4 H7 L3.5 0.5 Z" fill="#000"/></svg>
<div class="a" style="left:1262px;top:240px;width:16px;height:720px;background:#d4d0c8;border-top:1px solid #d4d0c8;border-left:1px solid #d4d0c8;border-right:1px solid #404040;border-bottom:1px solid #404040;box-shadow:inset 1px 1px #fff,inset -1px -1px #808080"></div>
<div class="a" style="left:1262px;top:960px;width:16px;height:16px;background:#d4d0c8;border-right:1px solid #404040;border-bottom:1px solid #404040;box-shadow:inset 1px 1px #fff,inset -1px -1px #808080"></div>
<svg class="a" style="left:1266px;top:966px" width="8" height="5"><path d="M0 0.5 H7 L3.5 4 Z" fill="#000"/></svg>
<!-- horizontal scrollbar -->
<div class="a" style="left:2px;top:976px;width:1260px;height:16px;background:repeating-conic-gradient(#d4d0c8 0 25%,#fff 0 50%) 0 0/2px 2px"></div>
<div class="a" style="left:2px;top:976px;width:16px;height:16px;background:#d4d0c8;border-right:1px solid #404040;border-bottom:1px solid #404040;box-shadow:inset 1px 1px #fff,inset -1px -1px #808080"></div>
<svg class="a" style="left:7px;top:980px" width="5" height="8"><path d="M4 0 V7 L0.5 3.5 Z" fill="#000"/></svg>
<div class="a" style="left:230px;top:976px;width:725px;height:16px;background:#d4d0c8;border-right:1px solid #404040;border-bottom:1px solid #404040;box-shadow:inset 1px 1px #fff,inset -1px -1px #808080"></div>
<div class="a" style="left:1246px;top:976px;width:16px;height:16px;background:#d4d0c8;border-right:1px solid #404040;border-bottom:1px solid #404040;box-shadow:inset 1px 1px #fff,inset -1px -1px #808080"></div>
<svg class="a" style="left:1252px;top:980px" width="5" height="8"><path d="M0.5 0 V7 L4 3.5 Z" fill="#000"/></svg>
<div class="a" style="left:1262px;top:976px;width:16px;height:17px;background:#d4d0c8"></div>
<div class="a" style="left:0;top:992px;width:1280px;height:1px;background:#d4d0c8"></div>

<!-- taskbar -->
<div class="a" style="left:0;top:993px;width:1280px;height:31px;background:#d4d0c8"></div>
<div class="a" style="left:0;top:993px;width:1280px;height:1px;background:#ecebe6"></div><div class="a" style="left:0;top:995px;width:1280px;height:1px;background:#fff"></div>
<div class="a" style="left:2px;top:998px;width:52px;height:22px;background:#d4d0c8;border-top:1px solid #fff;border-left:1px solid #fff;border-right:1px solid #404040;border-bottom:1px solid #404040;box-shadow:inset -1px -1px #808080"></div>
<svg class="a" style="left:4px;top:1000px" width="16" height="16"><path d="M1 3 Q4 1 7 3 V8 Q4 6 1 8Z" fill="#f05020"/><path d="M8 3 Q11 5 15 2 V7 Q11 10 8 8Z" fill="#40b030"/><path d="M1 9 Q4 7 7 9 V14 Q4 12 1 14Z" fill="#2070e0"/><path d="M8 9 Q11 11 15 8 V13 Q11 16 8 14Z" fill="#f0c000"/></svg>
<div class="a" style="left:21px;top:1002px;font-size:12px;line-height:14px;font-weight:bold;letter-spacing:0.2px">Start</div>
<div class="a sep" style="left:61px;top:1000px;height:18px"></div>
<svg class="a" style="left:70px;top:1000px" width="18" height="18"><rect x="2" y="2" width="13" height="14" rx="3" fill="#3070d0" stroke="#103070"/><path d="M6 5 H11 V13 H6 Z" fill="#fff"/><path d="M7 9 H12" stroke="#3070d0" stroke-width="2"/></svg>
<svg class="a" style="left:95px;top:1000px" width="18" height="18"><circle cx="9" cy="10" r="6" fill="#2a7ed8"/><path d="M5.5 9.7 H12.5" stroke="#fff" stroke-width="1.5"/><path d="M5.8 11 A3.3 3.3 0 1 1 12.3 9" stroke="#fff" stroke-width="1.5" fill="none"/><path d="M5.8 12 A3.3 3.3 0 0 0 12 12" stroke="#fff" stroke-width="1.5" fill="none"/><path d="M2 16 Q5 7 16 3" stroke="#e8b020" stroke-width="1.6" fill="none"/></svg>
<svg class="a" style="left:116px;top:1001px" width="17" height="17"><rect x="1" y="1" width="15" height="15" fill="#ffe080" stroke="#d09020"/><circle cx="8.5" cy="8.5" r="5" fill="#fff0c0" stroke="#c08000" stroke-width="1.2"/><path d="M8.5 5 V8.5 H11" stroke="#c08000" stroke-width="1.2" fill="none"/></svg>
<div class="a sep" style="left:143px;top:1000px;height:18px"></div>

<div id="tasks"></div>
<div class="a" style="left:150px;top:998px;width:48px;height:22px;background:#d4d0c8;border-top:1px solid #fff;border-left:1px solid #fff;border-right:1px solid #404040;border-bottom:1px solid #404040;box-shadow:inset -1px -1px #808080"></div>
<svg class="a" style="left:155px;top:1001px" width="16" height="16"><path d="M3 1 H10 L13 4 V14 H3 Z" fill="#c8d4f0" stroke="#6070a0"/><circle cx="8" cy="7" r="3" fill="#e8f0ff" stroke="#5060a0"/></svg>
<div class="a" style="left:173px;top:1003px;font-size:11px;line-height:13px;letter-spacing:0.4px;white-space:nowrap">S...</div>
<div class="a" style="left:201px;top:998px;width:48px;height:22px;background:#d4d0c8;border-top:1px solid #fff;border-left:1px solid #fff;border-right:1px solid #404040;border-bottom:1px solid #404040;box-shadow:inset -1px -1px #808080"></div>
<svg class="a" style="left:206px;top:1001px" width="16" height="16"><path d="M1 4 H6 L7 3 H12 V5 H15 V13 H1 Z" fill="#f0d860" stroke="#a08020"/><path d="M1 7 H15" stroke="#fff0a0"/></svg>
<div class="a" style="left:224px;top:1003px;font-size:11px;line-height:13px;letter-spacing:0.4px;white-space:nowrap">C...</div>
<div class="a" style="left:252px;top:998px;width:48px;height:22px;background:#d4d0c8;border-top:1px solid #fff;border-left:1px solid #fff;border-right:1px solid #404040;border-bottom:1px solid #404040;box-shadow:inset -1px -1px #808080"></div>
<svg class="a" style="left:257px;top:1001px" width="16" height="16"><circle cx="7" cy="7" r="6" fill="#2a80d0"/><path d="M3 4 Q6 6 5 10 Q9 9 10 5 Z" fill="#40b040"/><path d="M8 10 L14 13 L12 15" stroke="#6090c0" stroke-width="2" fill="none"/></svg>
<div class="a" style="left:275px;top:1003px;font-size:11px;line-height:13px;letter-spacing:0.4px;white-space:nowrap">N...</div>
<div class="a" style="left:303px;top:998px;width:48px;height:22px;background:#d4d0c8;border-top:1px solid #fff;border-left:1px solid #fff;border-right:1px solid #404040;border-bottom:1px solid #404040;box-shadow:inset -1px -1px #808080"></div>
<svg class="a" style="left:308px;top:1001px" width="16" height="16"><path d="M1 4 H6 L7 3 H12 V5 H15 V13 H1 Z" fill="#f0d860" stroke="#a08020"/><path d="M1 7 H15" stroke="#fff0a0"/></svg>
<div class="a" style="left:326px;top:1003px;font-size:11px;line-height:13px;letter-spacing:0.4px;white-space:nowrap">C...</div>
<div class="a" style="left:354px;top:998px;width:48px;height:22px;background:#d4d0c8;border-top:1px solid #fff;border-left:1px solid #fff;border-right:1px solid #404040;border-bottom:1px solid #404040;box-shadow:inset -1px -1px #808080"></div>
<svg class="a" style="left:359px;top:1001px" width="16" height="16"><circle cx="8" cy="8.5" r="6" fill="#2a7ed8"/><path d="M4.5 8.2 H11.5" stroke="#fff" stroke-width="1.5"/><path d="M4.8 9.5 A3.3 3.3 0 1 1 11.3 7.5" stroke="#fff" stroke-width="1.5" fill="none"/><path d="M4.8 10.5 A3.3 3.3 0 0 0 11 10.5" stroke="#fff" stroke-width="1.5" fill="none"/><path d="M2 14 Q4 6 14 2" stroke="#e8b020" stroke-width="1.6" fill="none"/></svg>
<div class="a" style="left:377px;top:1003px;font-size:11px;line-height:13px;letter-spacing:0.4px;white-space:nowrap">I...</div>
<div class="a" style="left:405px;top:998px;width:48px;height:22px;background:#d4d0c8;border-top:1px solid #fff;border-left:1px solid #fff;border-right:1px solid #404040;border-bottom:1px solid #404040;box-shadow:inset -1px -1px #808080"></div>
<svg class="a" style="left:410px;top:1001px" width="16" height="16"><rect x="2" y="1" width="12" height="14" rx="1" fill="#a0a8c8" stroke="#404870"/><rect x="6" y="3" width="4" height="10" fill="#e0e4f0" stroke="#404870" stroke-width="0.6"/></svg>
<div class="a" style="left:428px;top:1003px;font-size:11px;line-height:13px;letter-spacing:0.4px;white-space:nowrap">M...</div>
<div class="a" style="left:456px;top:998px;width:48px;height:22px;background:#d4d0c8;border-top:1px solid #fff;border-left:1px solid #fff;border-right:1px solid #404040;border-bottom:1px solid #404040;box-shadow:inset -1px -1px #808080"></div>
<svg class="a" style="left:461px;top:1001px" width="16" height="16"><circle cx="8" cy="8.5" r="6" fill="#2a7ed8"/><path d="M4.5 8.2 H11.5" stroke="#fff" stroke-width="1.5"/><path d="M4.8 9.5 A3.3 3.3 0 1 1 11.3 7.5" stroke="#fff" stroke-width="1.5" fill="none"/><path d="M4.8 10.5 A3.3 3.3 0 0 0 11 10.5" stroke="#fff" stroke-width="1.5" fill="none"/><path d="M2 14 Q4 6 14 2" stroke="#e8b020" stroke-width="1.6" fill="none"/></svg>
<div class="a" style="left:479px;top:1003px;font-size:11px;line-height:13px;letter-spacing:0.4px;white-space:nowrap">L...</div>
<div class="a" style="left:507px;top:998px;width:48px;height:22px;background:#d4d0c8;border-top:1px solid #fff;border-left:1px solid #fff;border-right:1px solid #404040;border-bottom:1px solid #404040;box-shadow:inset -1px -1px #808080"></div>
<svg class="a" style="left:512px;top:1001px" width="16" height="16"><circle cx="8" cy="8.5" r="6" fill="#2a7ed8"/><path d="M4.5 8.2 H11.5" stroke="#fff" stroke-width="1.5"/><path d="M4.8 9.5 A3.3 3.3 0 1 1 11.3 7.5" stroke="#fff" stroke-width="1.5" fill="none"/><path d="M4.8 10.5 A3.3 3.3 0 0 0 11 10.5" stroke="#fff" stroke-width="1.5" fill="none"/><path d="M2 14 Q4 6 14 2" stroke="#e8b020" stroke-width="1.6" fill="none"/></svg>
<div class="a" style="left:530px;top:1003px;font-size:11px;line-height:13px;letter-spacing:0.4px;white-space:nowrap">h...</div>
<div class="a" style="left:558px;top:998px;width:48px;height:22px;background:#d4d0c8;border-top:1px solid #fff;border-left:1px solid #fff;border-right:1px solid #404040;border-bottom:1px solid #404040;box-shadow:inset -1px -1px #808080"></div>
<svg class="a" style="left:563px;top:1001px" width="16" height="16"><rect x="1" y="1" width="14" height="14" fill="#e0f0e0" stroke="#208040"/><path d="M4 4 L12 12 M12 4 L4 12" stroke="#108030" stroke-width="2.5"/></svg>
<div class="a" style="left:581px;top:1003px;font-size:11px;line-height:13px;letter-spacing:0.4px;white-space:nowrap">M...</div>
<div class="a" style="left:609px;top:998px;width:48px;height:22px;background:#d4d0c8;border-top:1px solid #fff;border-left:1px solid #fff;border-right:1px solid #404040;border-bottom:1px solid #404040;box-shadow:inset -1px -1px #808080"></div>
<svg class="a" style="left:614px;top:1001px" width="16" height="16"><rect x="1" y="2" width="14" height="12" fill="#202010"/><path d="M0 6 H3 M0 10 H3" stroke="#2030d0" stroke-width="1.5"/><path d="M3 2.5 L12 8 L3 13.5 Z" fill="#f0e020"/><path d="M12 8 H16" stroke="#e02020" stroke-width="1.5"/><path d="M5.5 8 H8 M6.75 6.75 V9.25" stroke="#000"/></svg>
<div class="a" style="left:632px;top:1003px;font-size:11px;line-height:13px;letter-spacing:0.4px;white-space:nowrap">A...</div>
<div class="a" style="left:660px;top:998px;width:48px;height:22px;background:#d4d0c8;border-top:1px solid #fff;border-left:1px solid #fff;border-right:1px solid #404040;border-bottom:1px solid #404040;box-shadow:inset -1px -1px #808080"></div>
<svg class="a" style="left:665px;top:1001px" width="16" height="16"><rect x="1" y="2" width="14" height="12" fill="#202010"/><path d="M0 6 H3 M0 10 H3" stroke="#2030d0" stroke-width="1.5"/><path d="M3 2.5 L12 8 L3 13.5 Z" fill="#f0e020"/><path d="M12 8 H16" stroke="#e02020" stroke-width="1.5"/><path d="M5.5 8 H8 M6.75 6.75 V9.25" stroke="#000"/></svg>
<div class="a" style="left:683px;top:1003px;font-size:11px;line-height:13px;letter-spacing:0.4px;white-space:nowrap">A...</div>
<div class="a" style="left:711px;top:998px;width:48px;height:22px;background:#d4d0c8;border-top:1px solid #fff;border-left:1px solid #fff;border-right:1px solid #404040;border-bottom:1px solid #404040;box-shadow:inset -1px -1px #808080"></div>
<svg class="a" style="left:716px;top:1001px" width="16" height="16"><path d="M3 2 L11 1 L14 13 L5 15 Z" fill="#60a8f0" stroke="#3070c0"/></svg>
<div class="a" style="left:734px;top:1003px;font-size:11px;line-height:13px;letter-spacing:0.4px;white-space:nowrap">A...</div>
<div class="a" style="left:762px;top:998px;width:48px;height:22px;background:#d4d0c8;border-top:1px solid #fff;border-left:1px solid #fff;border-right:1px solid #404040;border-bottom:1px solid #404040;box-shadow:inset -1px -1px #808080"></div>
<svg class="a" style="left:767px;top:1001px" width="16" height="16"><rect x="2" y="1" width="12" height="14" rx="1" fill="#a0a8c8" stroke="#404870"/><rect x="6" y="3" width="4" height="10" fill="#e0e4f0" stroke="#404870" stroke-width="0.6"/></svg>
<div class="a" style="left:785px;top:1003px;font-size:11px;line-height:13px;letter-spacing:0.4px;white-space:nowrap">M...</div>
<div class="a" style="left:813px;top:998px;width:48px;height:22px;background:#d4d0c8;border-top:1px solid #fff;border-left:1px solid #fff;border-right:1px solid #404040;border-bottom:1px solid #404040;box-shadow:inset -1px -1px #808080"></div>
<svg class="a" style="left:818px;top:1001px" width="16" height="16"><rect x="1" y="2" width="14" height="12" fill="#202010"/><path d="M0 6 H3 M0 10 H3" stroke="#2030d0" stroke-width="1.5"/><path d="M3 2.5 L12 8 L3 13.5 Z" fill="#f0e020"/><path d="M12 8 H16" stroke="#e02020" stroke-width="1.5"/><path d="M5.5 8 H8 M6.75 6.75 V9.25" stroke="#000"/></svg>
<div class="a" style="left:836px;top:1003px;font-size:11px;line-height:13px;letter-spacing:0.4px;white-space:nowrap">W...</div>
<div class="a" style="left:864px;top:998px;width:48px;height:22px;background:#d4d0c8;border-top:1px solid #fff;border-left:1px solid #fff;border-right:1px solid #404040;border-bottom:1px solid #404040;box-shadow:inset -1px -1px #808080"></div>
<svg class="a" style="left:869px;top:1001px" width="16" height="16"><rect x="1" y="2" width="14" height="12" fill="#202010"/><path d="M0 6 H3 M0 10 H3" stroke="#2030d0" stroke-width="1.5"/><path d="M3 2.5 L12 8 L3 13.5 Z" fill="#f0e020"/><path d="M12 8 H16" stroke="#e02020" stroke-width="1.5"/><path d="M5.5 8 H8 M6.75 6.75 V9.25" stroke="#000"/></svg>
<div class="a" style="left:887px;top:1003px;font-size:11px;line-height:13px;letter-spacing:0.4px;white-space:nowrap">A...</div>
<div class="a" style="left:915px;top:998px;width:48px;height:22px;background:#d4d0c8;border-top:1px solid #fff;border-left:1px solid #fff;border-right:1px solid #404040;border-bottom:1px solid #404040;box-shadow:inset -1px -1px #808080"></div>
<svg class="a" style="left:920px;top:1001px" width="16" height="16"><rect x="1" y="2" width="14" height="12" fill="#202010"/><path d="M0 6 H3 M0 10 H3" stroke="#2030d0" stroke-width="1.5"/><path d="M3 2.5 L12 8 L3 13.5 Z" fill="#f0e020"/><path d="M12 8 H16" stroke="#e02020" stroke-width="1.5"/><path d="M5.5 8 H8 M6.75 6.75 V9.25" stroke="#000"/></svg>
<div class="a" style="left:938px;top:1003px;font-size:11px;line-height:13px;letter-spacing:0.4px;white-space:nowrap">A...</div>
<div class="a" style="left:966px;top:998px;width:48px;height:22px;background:#d4d0c8;border-top:1px solid #fff;border-left:1px solid #fff;border-right:1px solid #404040;border-bottom:1px solid #404040;box-shadow:inset -1px -1px #808080"></div>
<svg class="a" style="left:971px;top:1001px" width="16" height="16"><path d="M4 15 L7 3 L9 3 L8 15 Z" fill="#c09040"/><path d="M2 2 L6 6 M12 1 L10 7 M14 5 L10 9" stroke="#e04080" stroke-width="2"/><path d="M6 4 L3 1" stroke="#40a0e0" stroke-width="2"/></svg>
<div class="a" style="left:989px;top:1003px;font-size:11px;line-height:13px;letter-spacing:0.4px;white-space:nowrap">I...</div>
<div class="a" style="left:1017px;top:998px;width:48px;height:22px;background:#d4d0c8;border-top:1px solid #fff;border-left:1px solid #fff;border-right:1px solid #404040;border-bottom:1px solid #404040;box-shadow:inset -1px -1px #808080"></div>
<svg class="a" style="left:1022px;top:1001px" width="16" height="16"><rect x="1" y="2" width="14" height="12" fill="#202010"/><path d="M0 6 H3 M0 10 H3" stroke="#2030d0" stroke-width="1.5"/><path d="M3 2.5 L12 8 L3 13.5 Z" fill="#f0e020"/><path d="M12 8 H16" stroke="#e02020" stroke-width="1.5"/><path d="M5.5 8 H8 M6.75 6.75 V9.25" stroke="#000"/></svg>
<div class="a" style="left:1040px;top:1003px;font-size:11px;line-height:13px;letter-spacing:0.4px;white-space:nowrap">A...</div>
<div class="a" style="left:1068px;top:998px;width:49px;height:22px;background:repeating-conic-gradient(#d4d0c8 0 25%,#f4f2ee 0 50%) 0 0/2px 2px;border-top:1px solid #404040;border-left:1px solid #404040;border-right:1px solid #fff;border-bottom:1px solid #fff;box-shadow:inset 1px 1px #808080"></div>
<svg class="a" style="left:1074px;top:1002px" width="16" height="16"><rect x="1" y="2" width="14" height="12" fill="#202010"/><path d="M0 6 H3 M0 10 H3" stroke="#2030d0" stroke-width="1.5"/><path d="M3 2.5 L12 8 L3 13.5 Z" fill="#f0e020"/><path d="M12 8 H16" stroke="#e02020" stroke-width="1.5"/><path d="M5.5 8 H8 M6.75 6.75 V9.25" stroke="#000"/></svg>
<div class="a" style="left:1092px;top:1004px;font-size:11px;line-height:13px;letter-spacing:0.4px;font-weight:bold;white-space:nowrap">A...</div>
<!--/tasks-->

<div class="a sep" style="left:1127px;top:1000px;height:18px"></div>
<div class="a" style="left:1138px;top:1002px;width:16px;height:15px;background:#0a246a;color:#fff;font-size:10px;line-height:15px;text-align:center">DE</div>
<div class="a sep" style="left:1157px;top:1000px;height:18px"></div>
<div class="a" style="left:1165px;top:997px;width:113px;height:24px;border-top:1px solid #808080;border-left:1px solid #808080;border-right:1px solid #fff;border-bottom:1px solid #fff"></div>
<div class="a" style="left:1170px;top:1003px;font-size:11px;font-weight:bold;line-height:13px">«</div>
<svg class="a" style="left:1182px;top:1001px" width="18" height="17"><path d="M4 8 A5 5 0 0 1 14 6" stroke="#106010" stroke-width="4" fill="none"/><path d="M4 8 A5 5 0 0 1 14 6" stroke="#40e040" stroke-width="2" fill="none"/><path d="M14 9 A5 5 0 0 1 4 11" stroke="#106010" stroke-width="4" fill="none"/><path d="M14 9 A5 5 0 0 1 4 11" stroke="#40e040" stroke-width="2" fill="none"/></svg>
<svg class="a" style="left:1200px;top:1001px" width="16" height="17"><circle cx="7" cy="8" r="5.5" fill="#a0a0a0" stroke="#606060"/><circle cx="7" cy="8" r="2.5" fill="#d0d0d0"/><path d="M12 13 Q15 10 14 5" stroke="#8080c0" fill="none"/></svg>
<div class="a txt" style="left:1226px;top:1003px">2:13 PM</div>
</body></html>
